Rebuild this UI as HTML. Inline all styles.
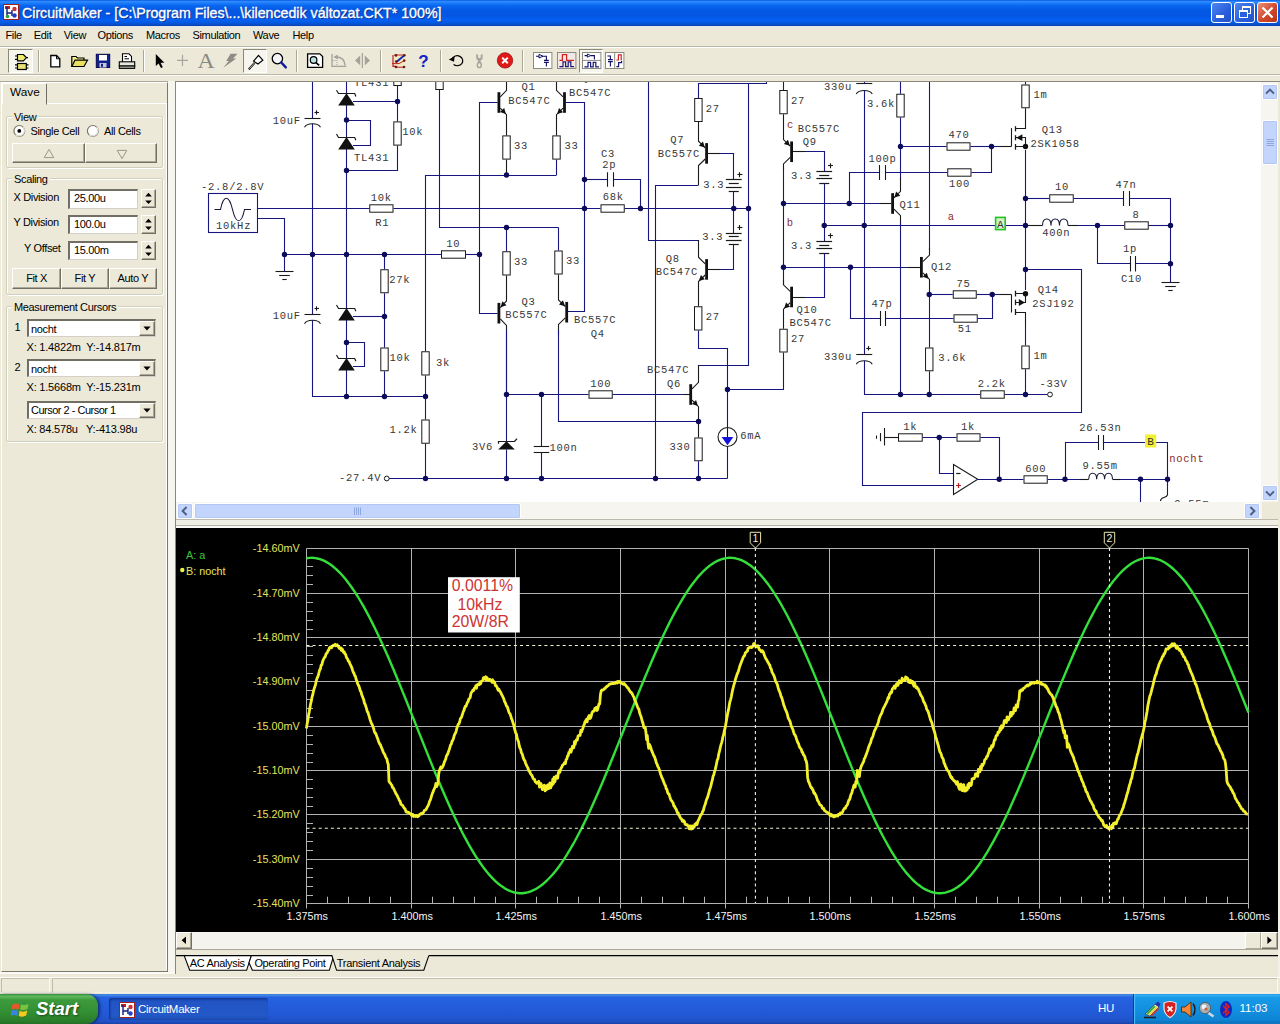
<!DOCTYPE html><html><head><meta charset="utf-8"><title>CircuitMaker</title><style>
html,body{margin:0;padding:0}
body{width:1280px;height:1024px;overflow:hidden;background:#ece9d8;position:relative;font-family:"Liberation Sans",sans-serif;font-size:11px;letter-spacing:-0.35px;color:#000}
div,span,svg{position:absolute;box-sizing:border-box}
svg text{white-space:pre}
#title{left:0;top:0;width:1280px;height:26px;background:linear-gradient(#0a5ae0 0,#2f8bff 6%,#1a7cfb 12%,#0966ef 22%,#0358e2 40%,#0356e4 60%,#0560f2 78%,#0458dd 88%,#0a4cc8 95%,#0840b0 100%)}
#title .txt{left:22px;top:5px;color:#fff;font-size:14.2px;letter-spacing:0;-webkit-text-stroke:0.35px #fff;white-space:nowrap;text-shadow:1px 1px 0 #0a2a8a}
.tb{top:2px;width:21px;height:21px;border:1px solid #fff;border-radius:3px;background:linear-gradient(135deg,#4d86ee,#2a5fdc 60%,#2250c8)}
#menu{left:0;top:26px;width:1280px;height:20px;background:linear-gradient(#e6e6e4 0,#ebe9de 3px,#ece9d8 4px)}
#menu span{top:3px;white-space:nowrap;font-size:11px}
#tool{left:0;top:47px;width:1280px;height:28px;border-top:1px solid #fff;border-bottom:1px solid #bab8a8;box-shadow:0 -1px 0 #bab8a8,0 1px 0 #fbfaf4}
.sep{top:50px;width:2px;height:22px;border-left:1px solid #aca899;border-right:1px solid #fff}
.pressed{background:#f6f5ee;border:1px solid #8a8878;border-right-color:#fff;border-bottom-color:#fff}
#lp{left:1px;top:82px;width:167px;height:890px;border-top:1px solid #fff;border-left:1px solid #fff;border-right:1px solid #7a786c;border-bottom:1px solid #7a786c}
.grp{border:1px solid #d0d0bf;box-shadow:inset 1px 1px 0 #fff,1px 1px 0 #fff;border-radius:2px}
.grp>b{left:5px;top:-6px;background:#ece9d8;padding:0 2px;font-weight:normal;white-space:nowrap;position:absolute}
.lbl{white-space:nowrap}
.inp{background:#fff;border:1px solid #7f9db9;border-top:2px solid #716f64;border-left:2px solid #716f64;border-right-color:#d4d0c8;border-bottom-color:#d4d0c8}
.inp span{left:4px;top:2px;white-space:nowrap}
.btn{background:#ece9d8;border:1px solid;border-color:#fff #716f64 #716f64 #fff;box-shadow:inset -1px -1px 0 #aca899;text-align:center;white-space:nowrap}
.spin{border:1px solid;border-color:#fff #716f64 #716f64 #fff;box-shadow:inset -1px -1px 0 #aca899;background:#ece9d8}
#schv{left:176px;top:82px;width:1085px;height:420px;background:#fff;overflow:hidden}
#schv svg{left:0;top:0}
#wavv{left:176px;top:528px;width:1102px;height:404px;background:#000;overflow:hidden}
#wavv svg{left:0;top:0}
.xsb{background:#c3d5fd;border:1px solid #fff;border-radius:2px;box-shadow:0 0 0 1px #b4c8f6 inset}
</style></head><body>

<div id="title">
<svg style="left:3px;top:4px" width="16" height="16" viewBox="0 0 16 16"><rect x="0.5" y="0.5" width="15" height="15" fill="#fff" stroke="#a02020"/><rect x="2" y="2" width="5" height="3" fill="#c02020"/><path d="M4 3 V13 M4 9 H9 M9 6 V12" stroke="#102080" stroke-width="1.4" fill="none"/><circle cx="11.5" cy="5" r="2.2" fill="#d03030"/><circle cx="11.5" cy="11.5" r="2.2" fill="#2040c0"/><circle cx="4.5" cy="12.5" r="1.8" fill="#30a030"/></svg>
<span class="txt">CircuitMaker - [C:\Program Files\...\kilencedik változat.CKT* 100%]</span>
<div class="tb" style="left:1211px"><div style="left:4px;top:12px;width:8px;height:3px;background:#fff"></div></div>
<div class="tb" style="left:1234px"><div style="left:7px;top:3px;width:9px;height:8px;border:1px solid #fff;border-top-width:2px"></div><div style="left:4px;top:7px;width:9px;height:8px;border:1px solid #fff;border-top-width:2px;background:#2a5fdc"></div></div>
<div class="tb" style="left:1257px;background:linear-gradient(135deg,#e8907a,#d0482a 55%,#b83418)"><svg style="left:3px;top:3px" width="13" height="13" viewBox="0 0 13 13"><path d="M1.5 1.5 L11.5 11.5 M11.5 1.5 L1.5 11.5" stroke="#fff" stroke-width="2.2"/></svg></div>
</div>
<div id="menu"><span style="left:5.5px">File</span><span style="left:33.8px">Edit</span><span style="left:63.8px">View</span><span style="left:97.5px">Options</span><span style="left:146px">Macros</span><span style="left:192.5px">Simulation</span><span style="left:253px">Wave</span><span style="left:292.5px">Help</span></div>
<div id="tool"></div>
<div class="pressed" style="left:8px;top:49px;width:25px;height:24px"></div>
<div class="pressed" style="left:243px;top:49px;width:24px;height:24px"></div>
<div class="pressed" style="left:579px;top:49px;width:24px;height:24px"></div>
<div class="sep" style="left:38px"></div><div class="sep" style="left:143px"></div><div class="sep" style="left:296px"></div><div class="sep" style="left:380px"></div><div class="sep" style="left:440px"></div><div class="sep" style="left:522px"></div>
<svg style="left:0;top:46px" width="640" height="30" viewBox="0 46 640 30">
<!-- parts browser -->
<path d="M15 56 H17.5 M15 59.4 H17.5 M26 57.6 H28" stroke="#000" stroke-width="1.2"/><path d="M17.5 54.5 H23.4 L26.4 57.6 L23.4 60.8 H17.5 Z" fill="#f0ec70" stroke="#000" stroke-width="1.2"/>
<path d="M15 64.8 H17.5 M15 68 H17.5 M26 64.8 H28.5 M26 68 H28.5" stroke="#000" stroke-width="1.2"/><rect x="17.5" y="63.5" width="8.8" height="6" fill="#e8e070" stroke="#000" stroke-width="1.2"/>
<!-- new -->
<path d="M50.8 55.5 H56.5 L59.8 58.8 V66.8 H50.8 Z" fill="#fff" stroke="#000" stroke-width="1.3"/><path d="M56.5 55.5 V58.8 H59.8" fill="none" stroke="#000" stroke-width="1"/>
<!-- open -->
<path d="M71.8 66.5 V56.5 H76 L77.5 58 H84 V60" fill="#f4f090" stroke="#000" stroke-width="1.2"/><path d="M71.8 66.5 L75 60.2 H87.5 L84 66.5 Z" fill="#e8e060" stroke="#000" stroke-width="1.2"/>
<!-- save -->
<rect x="96.3" y="54.3" width="13.4" height="13.2" fill="#10208c" stroke="#080850" stroke-width="1"/><rect x="99" y="55" width="8" height="5.5" fill="#fff"/><rect x="99.5" y="63" width="7" height="4.5" fill="#c8c8d8"/><rect x="101" y="63.8" width="2" height="3" fill="#10208c"/>
<!-- print -->
<path d="M122.5 62 V53.8 H129 L131.5 56.5 V62" fill="#fff" stroke="#000" stroke-width="1.1"/><rect x="119.3" y="61.8" width="15.4" height="4.2" fill="#e8e8e0" stroke="#000" stroke-width="1.1"/><rect x="119.3" y="66" width="15.4" height="2.4" fill="#a0a098" stroke="#000" stroke-width="1"/><path d="M124.5 56.5 H127 M124.5 58.8 H129" stroke="#000" stroke-width="1"/>
<!-- arrow -->
<path d="M155.8 54 V66 L158.6 63.4 L161 68 L162.8 67.2 L160.6 62.8 H164.4 Z" fill="#000"/>
<!-- plus -->
<path d="M177 60.4 H188 M182.5 54.8 V66" stroke="#a8a6a0" stroke-width="1.2"/>
<text transform="translate(197.6 67.7) scale(1.16 1)" fill="#8a8882" style="font-family:'Liberation Serif',serif;font-size:20.5px;letter-spacing:0">A</text>
<path d="M230.6 53.7 H237.5 L233 58.4 H236.3 L223.2 67.8 L228.8 60.9 H226.2 Z" fill="#8e8c86"/>
<!-- probe -->
<path d="M258.5 55.4 L262.8 60.2 L258 64 L253.6 61.2 Z" fill="#fff" stroke="#000" stroke-width="1.2"/><path d="M254.6 62.8 L248.8 69.4" stroke="#000" stroke-width="2"/><path d="M254.6 62.8 L249.4 68.8" stroke="#fff" stroke-width="0.7"/>
<!-- zoom -->
<circle cx="277.4" cy="58.6" r="5.2" fill="#f4f4fa" stroke="#000" stroke-width="1.3"/><path d="M281.3 62.5 L285.8 67.4" stroke="#1018a0" stroke-width="2.4" stroke-linecap="round"/>
<!-- fit page -->
<path d="M307.6 53.8 H319.8 L322.6 56.6 V67.4 H307.6 Z" fill="#fff" stroke="#000" stroke-width="1.3"/><circle cx="313.6" cy="60" r="3.3" fill="#b8e4e4" stroke="#000" stroke-width="1.2"/><path d="M316 62.6 L319.2 65.4" stroke="#000" stroke-width="1.6"/>
<!-- rotate -->
<path d="M332 54 V66.4 H346.4" stroke="#a4a29a" stroke-width="1.3" fill="none"/><path d="M336 57 Q344.6 57 345 65.4" stroke="#a4a29a" stroke-width="1.4" fill="none"/><path d="M333.4 57 L337.8 54.4 V59.6 Z" fill="#a4a29a"/><path d="M332.5 60.5 H337 V66" stroke="#a4a29a" stroke-width="1" stroke-dasharray="1 1" fill="none"/>
<!-- mirror -->
<path d="M362.4 53 V68" stroke="#a4a29a" stroke-width="1.2"/><path d="M360.2 55.6 V65.2 L355 60.4 Z M364.8 55.6 V65.2 L370 60.4 Z" fill="#a4a29a"/>
<!-- wire tool -->
<circle cx="399.5" cy="60.5" r="7" fill="#f4f0b0" opacity="0.45"/><path d="M393 55 V66.4 H396" stroke="#c02020" stroke-width="1.2" fill="none"/><path d="M394 55 H404 M392 63.6 H399 L404 60.8 M396 67.2 H404" stroke="#c02020" stroke-width="1" fill="none"/><path d="M396.4 62 L404.4 55.2" stroke="#1828b0" stroke-width="2"/><g fill="#701818"><circle cx="396" cy="55.4" r="1.3"/><circle cx="404.4" cy="55.2" r="1.3"/><circle cx="396.2" cy="61.6" r="1.3"/><circle cx="404.2" cy="60.6" r="1.3"/><circle cx="396" cy="67" r="1.3"/><circle cx="404" cy="67" r="1.3"/></g>
<text x="418.2" y="67.2" fill="#1420c8" style="font-size:17px;font-weight:bold">?</text>
<!-- reset -->
<path d="M452 58.8 A5.6 5 0 1 1 453.6 64.6" stroke="#000" stroke-width="1.2" fill="none"/><path d="M448.8 59.4 L454.6 56.4 L454 61.8 Z" fill="#000"/>
<!-- wrench -->
<path d="M476.2 54 V58 Q476.2 60 478 60.4 V63 H480.6 V60.4 Q482.6 60 482.6 58 V54 L480.6 55 V58 H478.2 V55 Z" fill="#a8a69e"/><ellipse cx="479.3" cy="65" rx="2" ry="2.6" fill="none" stroke="#a8a69e" stroke-width="1.5"/>
<!-- stop -->
<circle cx="505" cy="60.4" r="7.7" fill="#e01818"/><circle cx="505" cy="60.4" r="7.7" fill="none" stroke="#a01010" stroke-width="0.8"/><path d="M502.2 57.6 L507.8 63.2 M507.8 57.6 L502.2 63.2" stroke="#fff" stroke-width="2"/>
<!-- window icons -->
<rect x="533.5" y="52.5" width="18.4" height="16" fill="#fff" stroke="#8c8a80" stroke-width="1"/><path d="M536 56.2 H539 M543 56.2 H546.4 V60.4 M546.4 62.4 V66.6 M544 60.4 H548.8 M544 62.4 H548.8" stroke="#101060" stroke-width="1.1" fill="none"/><path d="M539 54.4 L543 56.2 L539 58 Z" fill="#fff" stroke="#101060" stroke-width="1"/>
<rect x="557.5" y="52.5" width="18.4" height="16" fill="#f4e8e4" stroke="#8c8a80" stroke-width="1"/><path d="M559.4 60.4 H562.4 V54.6 H566.6 V60.4 H574" stroke="#d02020" stroke-width="1.2" fill="none"/><path d="M559.4 66.6 H563 V61.8 H565.6 V66.6 H568.2 V61.8 H570.8 V66.6 H574" stroke="#181878" stroke-width="1.2" fill="none"/>
<rect x="582.5" y="52.5" width="18.4" height="16" fill="#fff" stroke="#8c8a80" stroke-width="1"/><path d="M582.5 60.4 H601" stroke="#8c8a80" stroke-width="1"/><path d="M584.6 55.6 H587.4 M590.8 55.6 H594.4 V59.4" stroke="#101060" stroke-width="1.1" fill="none"/><path d="M587.4 54 L590.8 55.6 L587.4 57.2 Z" fill="#fff" stroke="#101060" stroke-width="0.9"/><path d="M584.4 66.8 H588 V62.4 H590.6 V66.8 H593.2 V62.4 H595.8 V66.8 H599" stroke="#181878" stroke-width="1.2" fill="none"/>
<rect x="605.5" y="52.5" width="18.4" height="16" fill="#fff" stroke="#8c8a80" stroke-width="1"/><path d="M614.7 52.5 V68.5" stroke="#8c8a80" stroke-width="1"/><path d="M607.4 56 H610.4 V59.6 M610.4 61.6 V66.6 M608 59.6 H612.8 M608 61.6 H612.8" stroke="#101060" stroke-width="1.1" fill="none"/><path d="M616.4 60 H618.4 V54.8 H621.2 V60.4" stroke="#d02020" stroke-width="1.2" fill="none"/><path d="M616.4 66.6 H618.6 V62.6 H621.6 V61" stroke="#181878" stroke-width="1.2" fill="none"/>
</svg>

<div style="left:0;top:81px;width:176px;height:1px;background:#aaa89a"></div><div id="lp"></div>
<div style="left:2px;top:83.4px;width:45px;height:21.6px;background:#ece9d8;border:1px solid;border-color:#fff #716f64 transparent #fff;border-radius:2px 2px 0 0"><span class="lbl" style="left:7px;top:1px;font-size:11.8px;letter-spacing:0">Wave</span></div>
<div style="left:47px;top:103px;width:120px;height:1px;background:#fff"></div>
<div style="left:166px;top:104px;width:1px;height:866px;background:#fff"></div>
<div class="grp" style="left:6px;top:116px;width:157px;height:52px"><b>View</b></div>
<svg style="left:12px;top:124px" width="100" height="14" viewBox="12 124 100 14"><g><circle cx="19.3" cy="130.9" r="5.4" fill="#fff" stroke="#7a7868" stroke-width="1.2"/><path d="M15.5 134.7 A5.4 5.4 0 0 0 23.1 127.1" stroke="#e8e6da" stroke-width="1.3" fill="none"/><circle cx="19.3" cy="130.9" r="1.9" fill="#000"/><circle cx="92.8" cy="130.9" r="5.4" fill="#fff" stroke="#7a7868" stroke-width="1.2"/><path d="M89 134.7 A5.4 5.4 0 0 0 96.6 127.1" stroke="#e8e6da" stroke-width="1.3" fill="none"/></g></svg>
<span class="lbl" style="left:30.5px;top:124.6px">Single Cell</span><span class="lbl" style="left:104px;top:124.6px">All Cells</span>
<div class="btn" style="left:12.4px;top:142.5px;width:72.4px;height:20px"><svg style="left:30px;top:4px" width="12" height="11" viewBox="0 0 12 11"><path d="M1.2 9.6 L6 1.4 L10.8 9.6 Z" fill="none" stroke="#9a988c" stroke-width="1"/></svg></div>
<div class="btn" style="left:84.8px;top:142.5px;width:72px;height:20px"><svg style="left:30px;top:5px" width="12" height="11" viewBox="0 0 12 11"><path d="M1.2 1.4 L6 9.6 L10.8 1.4 Z" fill="none" stroke="#9a988c" stroke-width="1"/></svg></div>
<div class="grp" style="left:6px;top:177.5px;width:157px;height:117px"><b>Scaling</b></div>
<span class="lbl" style="left:13.5px;top:190.5px">X Division</span><span class="lbl" style="left:13.5px;top:216px">Y Division</span><span class="lbl" style="left:24px;top:242px">Y Offset</span>
<div class="inp" style="left:67.5px;top:189px;width:70.5px;height:19.5px"><span style="left:4.5px;top:1.3px">25.00u</span></div><div class="spin" style="left:141px;top:189px;width:15px;height:19px"><svg style="left:0;top:0" width="13" height="17" viewBox="0 0 13 17"><path d="M3.2 6.4 L6.5 2.8 L9.8 6.4 Z M3.2 10.4 L6.5 14 L9.8 10.4 Z" fill="#000"/></svg></div>
<div class="inp" style="left:67.5px;top:215px;width:70.5px;height:19px"><span style="left:4.5px;top:1px">100.0u</span></div><div class="spin" style="left:141px;top:215px;width:15px;height:19px"><svg style="left:0;top:0" width="13" height="17" viewBox="0 0 13 17"><path d="M3.2 6.4 L6.5 2.8 L9.8 6.4 Z M3.2 10.4 L6.5 14 L9.8 10.4 Z" fill="#000"/></svg></div>
<div class="inp" style="left:67.5px;top:241px;width:70.5px;height:19px"><span style="left:4.5px;top:1px">15.00m</span></div><div class="spin" style="left:141px;top:241px;width:15px;height:19px"><svg style="left:0;top:0" width="13" height="17" viewBox="0 0 13 17"><path d="M3.2 6.4 L6.5 2.8 L9.8 6.4 Z M3.2 10.4 L6.5 14 L9.8 10.4 Z" fill="#000"/></svg></div>
<div class="btn" style="left:12.4px;top:268px;width:48.4px;height:20.5px;line-height:18px">Fit X</div><div class="btn" style="left:60.8px;top:268px;width:48.2px;height:20.5px;line-height:18px">Fit Y</div><div class="btn" style="left:109px;top:268px;width:47.6px;height:20.5px;line-height:18px">Auto Y</div>
<div class="grp" style="left:6px;top:306px;width:157px;height:135.5px"><b>Measurement Cursors</b></div>
<span class="lbl" style="left:14.5px;top:321px">1</span><span class="lbl" style="left:14.5px;top:361px">2</span>
<div class="inp" style="left:26.5px;top:319.4px;width:129px;height:18px"><span style="left:2.5px;top:1.5px;letter-spacing:-0.35px">nocht</span><div class="spin" style="left:110px;top:0;width:16px;height:15px"><svg style="left:0;top:0" width="14" height="13" viewBox="0 0 14 13"><path d="M3.4 4.6 H10.6 L7 8.6 Z" fill="#000"/></svg></div></div><span class="lbl" style="left:26.5px;top:341px;letter-spacing:-0.2px">X: 1.4822m&nbsp; Y:-14.817m</span>
<div class="inp" style="left:26.5px;top:359.3px;width:129px;height:18px"><span style="left:2.5px;top:1.5px;letter-spacing:-0.35px">nocht</span><div class="spin" style="left:110px;top:0;width:16px;height:15px"><svg style="left:0;top:0" width="14" height="13" viewBox="0 0 14 13"><path d="M3.4 4.6 H10.6 L7 8.6 Z" fill="#000"/></svg></div></div><span class="lbl" style="left:26.5px;top:381px;letter-spacing:-0.2px">X: 1.5668m&nbsp; Y:-15.231m</span>
<div class="inp" style="left:26.5px;top:400.7px;width:129px;height:18px"><span style="left:2.5px;top:1.5px;letter-spacing:-0.5px">Cursor 2 - Cursor 1</span><div class="spin" style="left:110px;top:0;width:16px;height:15px"><svg style="left:0;top:0" width="14" height="13" viewBox="0 0 14 13"><path d="M3.4 4.6 H10.6 L7 8.6 Z" fill="#000"/></svg></div></div><span class="lbl" style="left:26.5px;top:423px;letter-spacing:-0.2px">X: 84.578u&nbsp;&nbsp; Y:-413.98u</span>
<div style="left:168px;top:81px;width:7px;height:893px;background:#f6f5ee"></div><div style="left:0;top:972px;width:176px;height:2px;background:#fbfaf4"></div>
<div style="left:175px;top:81px;width:1105px;height:1px;background:#8a887c"></div>
<div style="left:175px;top:81px;width:1px;height:893px;background:#8a887c"></div>
<div id="schv"><svg class="sch" width="1086" height="420" viewBox="176 82 1086 420" style="font-family:'Liberation Mono',monospace;font-size:10.5px;letter-spacing:0.75px">
<path d="M312.5 80 L312.5 118.5" stroke="#16167e" stroke-width="1.1" fill="none"/>
<path d="M312.5 123.7 L312.5 314.5" stroke="#16167e" stroke-width="1.1" fill="none"/>
<path d="M312.5 320.3 L312.5 396.5 L425.5 396.5" stroke="#16167e" stroke-width="1.1" fill="none"/>
<path d="M304.5 118.5 L320.5 118.5" stroke="#1a1a1a" stroke-width="1.1" fill="none"/>
<path d="M304.5 127.2 Q306.5 123.7 312.5 123.7 Q318.5 123.7 320.5 127.2" stroke="#1a1a1a" stroke-width="1.1" fill="none"/>
<path d="M314.5 112.5 L319 112.5" stroke="#1a1a1a" stroke-width="1.1" fill="none"/>
<path d="M316.5 110.3 L316.5 114.7" stroke="#1a1a1a" stroke-width="1.1" fill="none"/>
<path d="M304.5 314.5 L320.5 314.5" stroke="#1a1a1a" stroke-width="1.1" fill="none"/>
<path d="M304.5 323.8 Q306.5 320.3 312.5 320.3 Q318.5 320.3 320.5 323.8" stroke="#1a1a1a" stroke-width="1.1" fill="none"/>
<path d="M314.5 308.5 L319 308.5" stroke="#1a1a1a" stroke-width="1.1" fill="none"/>
<path d="M316.5 306.3 L316.5 310.7" stroke="#1a1a1a" stroke-width="1.1" fill="none"/>
<text x="272.7" y="124.15" fill="#383838">10uF</text>
<text x="272.7" y="319.4" fill="#383838">10uF</text>
<path d="M346.5 80 L346.5 396.5" stroke="#16167e" stroke-width="1.1" fill="none"/>
<path d="M346.5 93.25 L338.2 105.4 L354.8 105.4 Z" fill="#111"/>
<path d="M336.5 90.25 L338.5 93.5 L354.7 93.5 L355.9 96.45" stroke="#1a1a1a" stroke-width="1.2" fill="none"/>
<path d="M346.5 137 L338.2 149.5 L354.8 149.5 Z" fill="#111"/>
<path d="M336.5 134 L338.5 137.5 L354.7 137.5 L355.9 140.2" stroke="#1a1a1a" stroke-width="1.2" fill="none"/>
<path d="M346.5 308 L338.2 320.5 L354.8 320.5 Z" fill="#111"/>
<path d="M336.5 305 L338.5 308.5 L354.7 308.5 L355.9 311.2" stroke="#1a1a1a" stroke-width="1.2" fill="none"/>
<path d="M346.5 358 L338.2 370.5 L354.8 370.5 Z" fill="#111"/>
<path d="M336.5 355 L338.5 358.5 L354.7 358.5 L355.9 361.2" stroke="#1a1a1a" stroke-width="1.2" fill="none"/>
<path d="M353 101.5 L397.5 101.5" stroke="#16167e" stroke-width="1.1" fill="none"/>
<path d="M346.5 120.5 L370.5 120.5 L370.5 145.5 L353 145.5" stroke="#16167e" stroke-width="1.1" fill="none"/>
<path d="M346.5 342.5 L364.5 342.5 L364.5 366.5 L353 366.5" stroke="#16167e" stroke-width="1.1" fill="none"/>
<path d="M353 316.5 L384.5 316.5" stroke="#16167e" stroke-width="1.1" fill="none"/>
<text x="354" y="86.15" fill="#383838">TL431</text>
<text x="354" y="161" fill="#383838">TL431</text>
<rect x="393.8" y="70.5" width="7.4" height="15" fill="#fff" stroke="#1a1a1a" stroke-width="1"/>
<path d="M397.5 86 L397.5 121.4" stroke="#16167e" stroke-width="1.1" fill="none"/>
<rect x="393.8" y="121.9" width="7.4" height="23.2" fill="#fff" stroke="#1a1a1a" stroke-width="1"/>
<path d="M397.5 145.6 L397.5 170.5 L346.5 170.5" stroke="#16167e" stroke-width="1.1" fill="none"/>
<text x="402.2" y="134.9" fill="#383838">10k</text>
<rect x="435.8" y="70.5" width="7.4" height="19" fill="#fff" stroke="#1a1a1a" stroke-width="1"/>
<path d="M439.5 90 L439.5 227.5 L558.5 227.5" stroke="#16167e" stroke-width="1.1" fill="none"/>
<path d="M384.5 254.5 L384.5 269.25" stroke="#16167e" stroke-width="1.1" fill="none"/>
<rect x="380.8" y="269.75" width="7.4" height="23" fill="#fff" stroke="#1a1a1a" stroke-width="1"/>
<path d="M384.5 293.25 L384.5 347.5" stroke="#16167e" stroke-width="1.1" fill="none"/>
<rect x="380.8" y="348" width="7.4" height="22.75" fill="#fff" stroke="#1a1a1a" stroke-width="1"/>
<path d="M384.5 371.25 L384.5 396.5" stroke="#16167e" stroke-width="1.1" fill="none"/>
<text x="389.2" y="282.9" fill="#383838">27k</text>
<text x="389.45" y="361.15" fill="#383838">10k</text>
<rect x="208.5" y="193.5" width="49" height="39" fill="#fff" stroke="#16167e" stroke-width="1.1"/>
<path d="M214.5 209.5 H220.5 C223.5 194.5 229 194.5 232.5 209.5 C236 224.5 241.5 224.5 244.5 209.5 H251" stroke="#16163a" stroke-width="1.1" fill="none"/>
<text x="200.95" y="190.4" fill="#383838">-2.8/2.8V</text>
<text x="215.95" y="229.4" fill="#383838">10kHz</text>
<path d="M257.5 208.5 L369.25 208.5" stroke="#16167e" stroke-width="1.1" fill="none"/>
<rect x="369.75" y="204.8" width="23.25" height="7.4" fill="#fff" stroke="#1a1a1a" stroke-width="1"/>
<path d="M393.5 208.5 L600.5 208.5" stroke="#16167e" stroke-width="1.1" fill="none"/>
<rect x="601" y="204.8" width="23.25" height="7.4" fill="#fff" stroke="#1a1a1a" stroke-width="1"/>
<path d="M624.75 208.5 L748.5 208.5" stroke="#16167e" stroke-width="1.1" fill="none"/>
<text x="370.7" y="200.9" fill="#383838">10k</text>
<text x="375.2" y="226.15" fill="#383838">R1</text>
<text x="602.7" y="200.4" fill="#383838">68k</text>
<path d="M257.5 218.5 L284.5 218.5 L284.5 271.25" stroke="#16167e" stroke-width="1.1" fill="none"/>
<path d="M275.5 271.5 L293.5 271.5" stroke="#1a1a1a" stroke-width="1.1" fill="none"/>
<path d="M279.2 275.5 L289.8 275.5" stroke="#1a1a1a" stroke-width="1.1" fill="none"/>
<path d="M282.3 279.5 L286.7 279.5" stroke="#1a1a1a" stroke-width="1.1" fill="none"/>
<path d="M284.5 254.5 L441 254.5" stroke="#16167e" stroke-width="1.1" fill="none"/>
<rect x="441.5" y="250.8" width="24" height="7.4" fill="#fff" stroke="#1a1a1a" stroke-width="1"/>
<path d="M466 254.5 L479.5 254.5" stroke="#16167e" stroke-width="1.1" fill="none"/>
<text x="446.2" y="247.4" fill="#383838">10</text>
<path d="M556.5 175.5 L425.5 175.5 L425.5 351.25" stroke="#16167e" stroke-width="1.1" fill="none"/>
<rect x="421.8" y="351.75" width="7.4" height="23.25" fill="#fff" stroke="#1a1a1a" stroke-width="1"/>
<path d="M425.5 375.5 L425.5 419.5" stroke="#16167e" stroke-width="1.1" fill="none"/>
<rect x="421.8" y="420" width="7.4" height="23.25" fill="#fff" stroke="#1a1a1a" stroke-width="1"/>
<path d="M425.5 443.75 L425.5 478.5" stroke="#16167e" stroke-width="1.1" fill="none"/>
<text x="435.95" y="365.9" fill="#383838">3k</text>
<text x="389.45" y="433.4" fill="#383838">1.2k</text>
<path d="M389 478.5 L727.5 478.5" stroke="#16167e" stroke-width="1.1" fill="none"/>
<circle cx="386.75" cy="478.5" r="2.4" fill="#fff" stroke="#1a1a1a" stroke-width="1"/>
<text x="338.95" y="480.9" fill="#383838">-27.4V</text>
<path d="M497.6 102.5 L479.5 102.5 L479.5 313.5 L497.6 313.5" stroke="#16167e" stroke-width="1.1" fill="none"/>
<rect x="497.5" y="92.2" width="2.8" height="20.6" fill="#111"/>
<path d="M500.3 96.9 L506.5 90.3 L506.5 80" stroke="#1a1a1a" stroke-width="1.1" fill="none"/>
<path d="M500.3 108.1 L506.5 114.7 L506.5 135.4" stroke="#1a1a1a" stroke-width="1.1" fill="none"/>
<path d="M505.9 114.1 L499.96 111.98 L504.20 108.03 Z" fill="#111"/>
<rect x="502.8" y="135.9" width="7.4" height="23.2" fill="#fff" stroke="#1a1a1a" stroke-width="1"/>
<path d="M506.5 159.6 L506.5 175" stroke="#1a1a1a" stroke-width="1.1" fill="none"/>
<rect x="563.1" y="92.2" width="2.8" height="20.6" fill="#111"/>
<path d="M563.1 96.9 L556.5 90.3 L556.5 80" stroke="#1a1a1a" stroke-width="1.1" fill="none"/>
<path d="M563.1 108.1 L556.5 114.7 L556.5 135.4" stroke="#1a1a1a" stroke-width="1.1" fill="none"/>
<path d="M557.1 114.1 L559.01 108.09 L563.11 112.19 Z" fill="#111"/>
<rect x="552.8" y="135.9" width="7.4" height="23.2" fill="#fff" stroke="#1a1a1a" stroke-width="1"/>
<path d="M556.5 159.6 L556.5 175" stroke="#16167e" stroke-width="1.1" fill="none"/>
<text x="521.45" y="90.4" fill="#383838">Q1</text>
<text x="508.2" y="104.15" fill="#383838">BC547C</text>
<text x="568.95" y="95.9" fill="#383838">BC547C</text>
<text x="581.2" y="81" fill="#383838">Q2</text>
<text x="513.95" y="149.15" fill="#383838">33</text>
<text x="564.45" y="149.15" fill="#383838">33</text>
<path d="M566 102.5 L584.5 102.5 L584.5 311.5 L568 311.5" stroke="#16167e" stroke-width="1.1" fill="none"/>
<path d="M506.5 227.5 L506.5 251.25" stroke="#16167e" stroke-width="1.1" fill="none"/>
<rect x="502.8" y="251.75" width="7.4" height="23.25" fill="#fff" stroke="#1a1a1a" stroke-width="1"/>
<rect x="497.5" y="302.9" width="2.8" height="20.6" fill="#111"/>
<path d="M500.3 307.6 L506.5 301 L506.5 275.5" stroke="#1a1a1a" stroke-width="1.1" fill="none"/>
<path d="M500.3 318.8 L506.5 325.4 L506.5 394.5" stroke="#1a1a1a" stroke-width="1.1" fill="none"/>
<path d="M500.6 307.3 L502.31 301.23 L506.54 305.19 Z" fill="#111"/>
<path d="M506.5 330 L506.5 441" stroke="#16167e" stroke-width="1.1" fill="none"/>
<path d="M506.5 449.5 L506.5 478.5" stroke="#16167e" stroke-width="1.1" fill="none"/>
<path d="M558.5 227.5 L558.5 250.5" stroke="#16167e" stroke-width="1.1" fill="none"/>
<rect x="554.8" y="251" width="7.4" height="23" fill="#fff" stroke="#1a1a1a" stroke-width="1"/>
<rect x="565.3" y="301.9" width="2.8" height="20.6" fill="#111"/>
<path d="M565.3 306.6 L558.5 300 L558.5 274.5" stroke="#1a1a1a" stroke-width="1.1" fill="none"/>
<path d="M565.3 317.8 L558.5 324.4 L558.5 335" stroke="#1a1a1a" stroke-width="1.1" fill="none"/>
<path d="M565 306.3 L558.96 304.48 L563.00 300.32 Z" fill="#111"/>
<path d="M558.5 330 L558.5 421.5 L698.5 421.5" stroke="#16167e" stroke-width="1.1" fill="none"/>
<text x="513.95" y="264.65" fill="#383838">33</text>
<text x="565.95" y="263.65" fill="#383838">33</text>
<text x="521.45" y="305.4" fill="#383838">Q3</text>
<text x="505.2" y="317.9" fill="#383838">BC557C</text>
<text x="573.95" y="322.9" fill="#383838">BC557C</text>
<text x="590.7" y="336.9" fill="#383838">Q4</text>
<path d="M584.5 179.5 L607.75 179.5" stroke="#16167e" stroke-width="1.1" fill="none"/>
<path d="M607.5 172.25 L607.5 186.75" stroke="#1a1a1a" stroke-width="1.1" fill="none"/>
<path d="M613.5 172.25 L613.5 186.75" stroke="#1a1a1a" stroke-width="1.1" fill="none"/>
<path d="M613.5 179.5 L640.5 179.5 L640.5 208.5" stroke="#16167e" stroke-width="1.1" fill="none"/>
<text x="600.95" y="157.4" fill="#383838">C3</text>
<text x="602.2" y="167.9" fill="#383838">2p</text>
<path d="M506.5 441.25 L498.2 449.5 L514.8 449.5 Z" fill="#111"/>
<path d="M498.5 443.75 L498.5 441.5 L514.5 441.5 L517 438.75" stroke="#1a1a1a" stroke-width="1.2" fill="none"/>
<text x="471.95" y="449.65" fill="#383838">3V6</text>
<path d="M506.5 394.5 L588.5 394.5" stroke="#16167e" stroke-width="1.1" fill="none"/>
<rect x="589" y="390.8" width="23.25" height="7.4" fill="#fff" stroke="#1a1a1a" stroke-width="1"/>
<path d="M612.75 394.5 L686 394.5" stroke="#16167e" stroke-width="1.1" fill="none"/>
<path d="M684 394.5 L690.7 394.5" stroke="#1a1a1a" stroke-width="1.1" fill="none"/>
<text x="590.2" y="386.65" fill="#383838">100</text>
<path d="M541.5 394.5 L541.5 446.25" stroke="#16167e" stroke-width="1.1" fill="none"/>
<path d="M533.75 446.5 L549.25 446.5" stroke="#1a1a1a" stroke-width="1.1" fill="none"/>
<path d="M533.75 452.5 L549.25 452.5" stroke="#1a1a1a" stroke-width="1.1" fill="none"/>
<path d="M541.5 452 L541.5 478.5" stroke="#16167e" stroke-width="1.1" fill="none"/>
<text x="549.45" y="450.9" fill="#383838">100n</text>
<path d="M648.5 80 L648.5 240.5 L698 240.5" stroke="#16167e" stroke-width="1.1" fill="none"/>
<path d="M698 185.5 L655.5 185.5 L655.5 478.5" stroke="#16167e" stroke-width="1.1" fill="none"/>
<path d="M766.5 80 L766.5 83.5 L698.5 83.5 L698.5 98" stroke="#16167e" stroke-width="1.1" fill="none"/>
<rect x="694.7" y="98.5" width="7.4" height="23" fill="#fff" stroke="#1a1a1a" stroke-width="1"/>
<text x="705.7" y="112.15" fill="#383838">27</text>
<path d="M748.5 83.75 L748.5 365.5 L698.5 365.5" stroke="#16167e" stroke-width="1.1" fill="none"/>
<rect x="705.2" y="143.1" width="2.8" height="20.6" fill="#111"/>
<path d="M705.2 147.8 L698.5 141.2 L698.5 122" stroke="#1a1a1a" stroke-width="1.1" fill="none"/>
<path d="M705.2 159 L698.5 165.6 L698.5 185.5" stroke="#1a1a1a" stroke-width="1.1" fill="none"/>
<path d="M704.9 147.5 L698.86 145.68 L702.90 141.52 Z" fill="#111"/>
<path d="M708 153.5 L720 153.5" stroke="#1a1a1a" stroke-width="1.1" fill="none"/>
<path d="M720 153.5 L733.5 153.5 L733.5 179.4" stroke="#16167e" stroke-width="1.1" fill="none"/>
<path d="M725.85 179.5 L741.65 179.5" stroke="#1a1a1a" stroke-width="1.2" fill="none"/>
<path d="M728.75 183.5 L738.75 183.5" stroke="#1a1a1a" stroke-width="1.2" fill="none"/>
<path d="M725.85 187.5 L741.65 187.5" stroke="#1a1a1a" stroke-width="1.2" fill="none"/>
<path d="M728.75 191.5 L738.75 191.5" stroke="#1a1a1a" stroke-width="1.2" fill="none"/>
<path d="M737.45 174.5 L742.45 174.5" stroke="#1a1a1a" stroke-width="1.1" fill="none"/>
<path d="M739.5 172.2 L739.5 177.2" stroke="#1a1a1a" stroke-width="1.1" fill="none"/>
<path d="M733.5 191.2 L733.5 233" stroke="#16167e" stroke-width="1.1" fill="none"/>
<path d="M725.85 233.5 L741.65 233.5" stroke="#1a1a1a" stroke-width="1.2" fill="none"/>
<path d="M728.75 236.5 L738.75 236.5" stroke="#1a1a1a" stroke-width="1.2" fill="none"/>
<path d="M725.85 240.5 L741.65 240.5" stroke="#1a1a1a" stroke-width="1.2" fill="none"/>
<path d="M728.75 244.5 L738.75 244.5" stroke="#1a1a1a" stroke-width="1.2" fill="none"/>
<path d="M737.45 227.5 L742.45 227.5" stroke="#1a1a1a" stroke-width="1.1" fill="none"/>
<path d="M739.5 225 L739.5 230" stroke="#1a1a1a" stroke-width="1.1" fill="none"/>
<path d="M733.5 244.8 L733.5 269.5 L720 269.5" stroke="#16167e" stroke-width="1.1" fill="none"/>
<path d="M720 269.5 L708 269.5" stroke="#1a1a1a" stroke-width="1.1" fill="none"/>
<text x="670.2" y="143.4" fill="#383838">Q7</text>
<text x="657.7" y="157.4" fill="#383838">BC557C</text>
<text x="703.2" y="187.6" fill="#383838">3.3</text>
<text x="702.2" y="240.4" fill="#383838">3.3</text>
<rect x="705.2" y="259.1" width="2.8" height="20.6" fill="#111"/>
<path d="M705.2 263.8 L698.5 257.2 L698.5 240" stroke="#1a1a1a" stroke-width="1.1" fill="none"/>
<path d="M705.2 275 L698.5 281.6 L698.5 306.25" stroke="#1a1a1a" stroke-width="1.1" fill="none"/>
<path d="M698.8 281 L700.90 275.05 L704.87 279.29 Z" fill="#111"/>
<rect x="694.5" y="306.75" width="7.4" height="23.25" fill="#fff" stroke="#1a1a1a" stroke-width="1"/>
<text x="665.7" y="261.65" fill="#383838">Q8</text>
<text x="655.7" y="274.65" fill="#383838">BC547C</text>
<text x="705.7" y="319.65" fill="#383838">27</text>
<path d="M698.5 330.5 L698.5 348.5 L727.5 348.5 L727.5 427.5" stroke="#16167e" stroke-width="1.1" fill="none"/>
<path d="M727.5 389.5 L783.5 389.5 L783.5 352.5" stroke="#16167e" stroke-width="1.1" fill="none"/>
<circle cx="727.5" cy="437" r="9.5" fill="#fff" stroke="#1a1a1a" stroke-width="1.1"/>
<path d="M727.5 427.5 L727.5 437" stroke="#1a1a1a" stroke-width="1.1" fill="none"/>
<path d="M721.7 437 H733.3 L727.5 445.2 Z" fill="#1414d8"/>
<path d="M727.5 446.5 L727.5 478.5" stroke="#16167e" stroke-width="1.1" fill="none"/>
<text x="740.2" y="439.15" fill="#383838">6mA</text>
<rect x="689.3" y="384.2" width="2.8" height="20.6" fill="#111"/>
<path d="M692.1 388.9 L698.5 382.3 L698.5 365" stroke="#1a1a1a" stroke-width="1.1" fill="none"/>
<path d="M692.1 400.1 L698.5 406.7 L698.5 437.5" stroke="#1a1a1a" stroke-width="1.1" fill="none"/>
<path d="M697.9 406.1 L691.92 404.09 L696.09 400.06 Z" fill="#111"/>
<rect x="694.8" y="438" width="7.4" height="22.75" fill="#fff" stroke="#1a1a1a" stroke-width="1"/>
<path d="M698.5 461.25 L698.5 478.5" stroke="#16167e" stroke-width="1.1" fill="none"/>
<text x="646.95" y="372.9" fill="#383838">BC547C</text>
<text x="666.95" y="386.65" fill="#383838">Q6</text>
<text x="669.45" y="449.6" fill="#383838">330</text>
<circle cx="346.5" cy="120" r="2.7" fill="#0c0c5a"/>
<circle cx="346.5" cy="170.5" r="2.7" fill="#0c0c5a"/>
<circle cx="346.5" cy="254.5" r="2.7" fill="#0c0c5a"/>
<circle cx="346.5" cy="342.5" r="2.7" fill="#0c0c5a"/>
<circle cx="346.5" cy="396.5" r="2.7" fill="#0c0c5a"/>
<circle cx="397.5" cy="101.5" r="2.7" fill="#0c0c5a"/>
<circle cx="384.5" cy="254.5" r="2.7" fill="#0c0c5a"/>
<circle cx="384.5" cy="316.5" r="2.7" fill="#0c0c5a"/>
<circle cx="384.5" cy="396.5" r="2.7" fill="#0c0c5a"/>
<circle cx="284.5" cy="254.5" r="2.7" fill="#0c0c5a"/>
<circle cx="312.5" cy="254.5" r="2.7" fill="#0c0c5a"/>
<circle cx="479.5" cy="254.5" r="2.7" fill="#0c0c5a"/>
<circle cx="425.5" cy="396.5" r="2.7" fill="#0c0c5a"/>
<circle cx="425.5" cy="478.5" r="2.7" fill="#0c0c5a"/>
<circle cx="506.5" cy="175" r="2.7" fill="#0c0c5a"/>
<circle cx="506.5" cy="227.5" r="2.7" fill="#0c0c5a"/>
<circle cx="506.5" cy="394.5" r="2.7" fill="#0c0c5a"/>
<circle cx="506.5" cy="478.5" r="2.7" fill="#0c0c5a"/>
<circle cx="541.5" cy="394.5" r="2.7" fill="#0c0c5a"/>
<circle cx="541.5" cy="478.5" r="2.7" fill="#0c0c5a"/>
<circle cx="584.5" cy="179.5" r="2.7" fill="#0c0c5a"/>
<circle cx="584.5" cy="208.5" r="2.7" fill="#0c0c5a"/>
<circle cx="640.5" cy="208.5" r="2.7" fill="#0c0c5a"/>
<circle cx="733.75" cy="208.5" r="2.7" fill="#0c0c5a"/>
<circle cx="748.5" cy="208.5" r="2.7" fill="#0c0c5a"/>
<circle cx="655.5" cy="478.5" r="2.7" fill="#0c0c5a"/>
<circle cx="698.5" cy="421.5" r="2.7" fill="#0c0c5a"/>
<circle cx="698.5" cy="478.5" r="2.7" fill="#0c0c5a"/>
<circle cx="727.5" cy="389.5" r="2.7" fill="#0c0c5a"/>
<path d="M783.5 80 L783.5 90" stroke="#16167e" stroke-width="1.1" fill="none"/>
<rect x="779.8" y="90.5" width="7.4" height="23.25" fill="#fff" stroke="#1a1a1a" stroke-width="1"/>
<text x="790.95" y="104.15" fill="#383838">27</text>
<rect x="790.2" y="141.45" width="2.8" height="20.6" fill="#111"/>
<path d="M790.2 146.15 L783.5 139.55 L783.5 114.25" stroke="#1a1a1a" stroke-width="1.1" fill="none"/>
<path d="M790.2 157.35 L783.5 163.95 L783.5 170" stroke="#1a1a1a" stroke-width="1.1" fill="none"/>
<path d="M789.9 145.85 L783.87 143.99 L787.94 139.85 Z" fill="#111"/>
<path d="M783.5 168 L783.5 285" stroke="#16167e" stroke-width="1.1" fill="none"/>
<text x="787" y="127.9" fill="#8a2a2a">c</text>
<text x="797.7" y="131.65" fill="#383838">BC557C</text>
<text x="802.7" y="145.4" fill="#383838">Q9</text>
<path d="M793 151.5 L805 151.5" stroke="#1a1a1a" stroke-width="1.1" fill="none"/>
<path d="M805 151.5 L824.5 151.5 L824.5 171.25" stroke="#16167e" stroke-width="1.1" fill="none"/>
<path d="M816.35 171.5 L832.15 171.5" stroke="#1a1a1a" stroke-width="1.2" fill="none"/>
<path d="M819.25 175.5 L829.25 175.5" stroke="#1a1a1a" stroke-width="1.2" fill="none"/>
<path d="M816.35 178.5 L832.15 178.5" stroke="#1a1a1a" stroke-width="1.2" fill="none"/>
<path d="M819.25 183.5 L829.25 183.5" stroke="#1a1a1a" stroke-width="1.2" fill="none"/>
<path d="M827.95 165.5 L832.95 165.5" stroke="#1a1a1a" stroke-width="1.1" fill="none"/>
<path d="M830.5 163.25 L830.5 168.25" stroke="#1a1a1a" stroke-width="1.1" fill="none"/>
<path d="M824.5 183 L824.5 241.25" stroke="#16167e" stroke-width="1.1" fill="none"/>
<path d="M816.35 241.5 L832.15 241.5" stroke="#1a1a1a" stroke-width="1.2" fill="none"/>
<path d="M819.25 245.5 L829.25 245.5" stroke="#1a1a1a" stroke-width="1.2" fill="none"/>
<path d="M816.35 248.5 L832.15 248.5" stroke="#1a1a1a" stroke-width="1.2" fill="none"/>
<path d="M819.25 253.5 L829.25 253.5" stroke="#1a1a1a" stroke-width="1.2" fill="none"/>
<path d="M827.95 235.5 L832.95 235.5" stroke="#1a1a1a" stroke-width="1.1" fill="none"/>
<path d="M830.5 233.25 L830.5 238.25" stroke="#1a1a1a" stroke-width="1.1" fill="none"/>
<path d="M824.5 253 L824.5 297.5 L805 297.5" stroke="#16167e" stroke-width="1.1" fill="none"/>
<path d="M805 297.5 L793 297.5" stroke="#1a1a1a" stroke-width="1.1" fill="none"/>
<text x="790.95" y="178.65" fill="#383838">3.3</text>
<text x="786.7" y="226.15" fill="#8a2a2a">b</text>
<text x="790.95" y="248.65" fill="#383838">3.3</text>
<rect x="790.2" y="286.7" width="2.8" height="20.6" fill="#111"/>
<path d="M790.2 291.4 L783.5 284.8 L783.5 280" stroke="#1a1a1a" stroke-width="1.1" fill="none"/>
<path d="M790.2 302.6 L783.5 309.2 L783.5 328.75" stroke="#1a1a1a" stroke-width="1.1" fill="none"/>
<path d="M784.1 308.6 L786.06 302.61 L790.13 306.74 Z" fill="#111"/>
<rect x="779.8" y="329.25" width="7.4" height="22.75" fill="#fff" stroke="#1a1a1a" stroke-width="1"/>
<text x="796.45" y="312.9" fill="#383838">Q10</text>
<text x="789.45" y="326.15" fill="#383838">BC547C</text>
<text x="790.95" y="342.4" fill="#383838">27</text>
<path d="M824.25 225.5 L1025.5 225.5" stroke="#16167e" stroke-width="1.1" fill="none"/>
<path d="M783.5 203.5 L880 203.5" stroke="#16167e" stroke-width="1.1" fill="none"/>
<path d="M880 203.5 L891.2 203.5" stroke="#1a1a1a" stroke-width="1.1" fill="none"/>
<path d="M849.5 203.5 L849.5 172.5 L879.75 172.5" stroke="#16167e" stroke-width="1.1" fill="none"/>
<path d="M879.5 165 L879.5 180" stroke="#1a1a1a" stroke-width="1.1" fill="none"/>
<path d="M885.5 165 L885.5 180" stroke="#1a1a1a" stroke-width="1.1" fill="none"/>
<path d="M885.25 172.5 L947.25 172.5" stroke="#16167e" stroke-width="1.1" fill="none"/>
<rect x="947.75" y="168.8" width="23.25" height="7.4" fill="#fff" stroke="#1a1a1a" stroke-width="1"/>
<path d="M971.5 172.5 L991.5 172.5 L991.5 146.5" stroke="#16167e" stroke-width="1.1" fill="none"/>
<text x="868.45" y="161.65" fill="#383838">100p</text>
<text x="948.95" y="186.65" fill="#383838">100</text>
<path d="M856.25 83.5 L872.25 83.5" stroke="#1a1a1a" stroke-width="1.1" fill="none"/>
<path d="M856.25 94 Q858.25 90.5 864.25 90.5 Q870.25 90.5 872.25 94" stroke="#1a1a1a" stroke-width="1.1" fill="none"/>
<path d="M864.5 90.5 L864.5 354.25" stroke="#16167e" stroke-width="1.1" fill="none"/>
<path d="M856.25 354.5 L872.25 354.5" stroke="#1a1a1a" stroke-width="1.1" fill="none"/>
<path d="M856.25 364.25 Q858.25 360.75 864.25 360.75 Q870.25 360.75 872.25 364.25" stroke="#1a1a1a" stroke-width="1.1" fill="none"/>
<path d="M866.25 348.5 L870.75 348.5" stroke="#1a1a1a" stroke-width="1.1" fill="none"/>
<path d="M868.5 346.05 L868.5 350.45" stroke="#1a1a1a" stroke-width="1.1" fill="none"/>
<path d="M864.5 360.75 L864.5 394.5 L980.25 394.5" stroke="#16167e" stroke-width="1.1" fill="none"/>
<text x="823.95" y="89.65" fill="#383838">330u</text>
<text x="823.95" y="359.9" fill="#383838">330u</text>
<path d="M864.5 80 L864.5 83.75" stroke="#16167e" stroke-width="1.1" fill="none"/>
<path d="M900.5 80 L900.5 93.75" stroke="#16167e" stroke-width="1.1" fill="none"/>
<rect x="896.8" y="94.25" width="7.4" height="22.75" fill="#fff" stroke="#1a1a1a" stroke-width="1"/>
<path d="M900.5 117.5 L900.5 180" stroke="#16167e" stroke-width="1.1" fill="none"/>
<text x="866.95" y="107.15" fill="#383838">3.6k</text>
<rect x="891.2" y="193.2" width="2.8" height="20.6" fill="#111"/>
<path d="M894 197.9 L900.5 191.3 L900.5 178" stroke="#1a1a1a" stroke-width="1.1" fill="none"/>
<path d="M894 209.1 L900.5 215.7 L900.5 225" stroke="#1a1a1a" stroke-width="1.1" fill="none"/>
<path d="M894.3 197.6 L896.16 191.57 L900.29 195.64 Z" fill="#111"/>
<path d="M900.5 222 L900.5 394.5" stroke="#16167e" stroke-width="1.1" fill="none"/>
<text x="899.45" y="207.9" fill="#383838">Q11</text>
<path d="M929.5 80 L929.5 250" stroke="#16167e" stroke-width="1.1" fill="none"/>
<rect x="920" y="256.95" width="2.8" height="20.6" fill="#111"/>
<path d="M922.8 261.65 L929.5 255.05 L929.5 248" stroke="#1a1a1a" stroke-width="1.1" fill="none"/>
<path d="M922.8 272.85 L929.5 279.45 L929.5 296" stroke="#1a1a1a" stroke-width="1.1" fill="none"/>
<path d="M928.65 278.85 L922.66 276.86 L926.82 272.82 Z" fill="#111"/>
<path d="M929.5 294.5 L929.5 347.5" stroke="#16167e" stroke-width="1.1" fill="none"/>
<rect x="925.55" y="348" width="7.4" height="22.75" fill="#fff" stroke="#1a1a1a" stroke-width="1"/>
<path d="M929.5 371.25 L929.5 394.5" stroke="#16167e" stroke-width="1.1" fill="none"/>
<text x="930.95" y="270.4" fill="#383838">Q12</text>
<text x="938.2" y="360.9" fill="#383838">3.6k</text>
<path d="M783.5 267.5 L908 267.5" stroke="#16167e" stroke-width="1.1" fill="none"/>
<path d="M908 267.5 L920 267.5" stroke="#1a1a1a" stroke-width="1.1" fill="none"/>
<path d="M850.5 267.25 L850.5 318.5 L880.25 318.5" stroke="#16167e" stroke-width="1.1" fill="none"/>
<path d="M880.5 311 L880.5 326" stroke="#1a1a1a" stroke-width="1.1" fill="none"/>
<path d="M885.5 311 L885.5 326" stroke="#1a1a1a" stroke-width="1.1" fill="none"/>
<path d="M885.5 318.5 L953.5 318.5" stroke="#16167e" stroke-width="1.1" fill="none"/>
<rect x="954" y="314.8" width="23.25" height="7.4" fill="#fff" stroke="#1a1a1a" stroke-width="1"/>
<path d="M977.75 318.5 L992.5 318.5 L992.5 294.5" stroke="#16167e" stroke-width="1.1" fill="none"/>
<text x="871.45" y="306.65" fill="#383838">47p</text>
<text x="957.7" y="332.4" fill="#383838">51</text>
<path d="M900.5 146.5 L946.5 146.5" stroke="#16167e" stroke-width="1.1" fill="none"/>
<rect x="947" y="142.8" width="23" height="7.4" fill="#fff" stroke="#1a1a1a" stroke-width="1"/>
<path d="M970.5 146.5 L1000 146.5" stroke="#16167e" stroke-width="1.1" fill="none"/>
<path d="M1000 146.5 L1011.4 146.5" stroke="#1a1a1a" stroke-width="1.1" fill="none"/>
<text x="948.45" y="138.4" fill="#383838">470</text>
<path d="M929.25 294.5 L952.75 294.5" stroke="#16167e" stroke-width="1.1" fill="none"/>
<rect x="953.25" y="290.8" width="23" height="7.4" fill="#fff" stroke="#1a1a1a" stroke-width="1"/>
<path d="M976.75 294.5 L1000 294.5" stroke="#16167e" stroke-width="1.1" fill="none"/>
<path d="M1000 294.5 L1011.4 294.5" stroke="#1a1a1a" stroke-width="1.1" fill="none"/>
<text x="956.45" y="287.4" fill="#383838">75</text>
<text x="947.7" y="220.4" fill="#8a2a2a">a</text>
<rect x="995.6" y="217.4" width="9.6" height="12.2" fill="#d8f0c8" stroke="#22c422" stroke-width="1.6"/>
<text x="996.9" y="227.6" fill="#333" style="font-size:11px">A</text>
<rect x="1021.8" y="85" width="7.4" height="22.75" fill="#fff" stroke="#1a1a1a" stroke-width="1"/>
<path d="M1025.5 80 L1025.5 84.5" stroke="#16167e" stroke-width="1.1" fill="none"/>
<text x="1033.45" y="97.9" fill="#383838">1m</text>
<path d="M1025.5 108.25 L1025.5 128.5 L1015.4 128.5" stroke="#1a1a1a" stroke-width="1.1" fill="none"/>
<path d="M1011.5 128.1 L1011.5 146.5" stroke="#1a1a1a" stroke-width="1.1" fill="none"/>
<path d="M1015.5 126.2 L1015.5 131.4" stroke="#1a1a1a" stroke-width="1.3" fill="none"/>
<path d="M1015.5 135.2 L1015.5 140.3" stroke="#1a1a1a" stroke-width="1.3" fill="none"/>
<path d="M1015.5 144 L1015.5 149.7" stroke="#1a1a1a" stroke-width="1.3" fill="none"/>
<path d="M1015.4 137.5 L1025.5 137.5 L1025.5 146.5 L1015.4 146.5" stroke="#1a1a1a" stroke-width="1.1" fill="none"/>
<path d="M1016.2 137.7 L1022.40 134.30 L1022.40 141.10 Z" fill="#111"/>
<text x="1041.7" y="132.9" fill="#383838">Q13</text>
<text x="1030.45" y="146.65" fill="#383838">2SK1058</text>
<path d="M1025.5 150 L1025.5 290" stroke="#16167e" stroke-width="1.1" fill="none"/>
<path d="M1011.5 294.5 L1011.5 312.5" stroke="#1a1a1a" stroke-width="1.1" fill="none"/>
<path d="M1015.5 290.7 L1015.5 296.5" stroke="#1a1a1a" stroke-width="1.3" fill="none"/>
<path d="M1015.5 299.7 L1015.5 305.2" stroke="#1a1a1a" stroke-width="1.3" fill="none"/>
<path d="M1015.5 309 L1015.5 315" stroke="#1a1a1a" stroke-width="1.3" fill="none"/>
<path d="M1015.4 293.5 L1025.5 293.5 L1025.5 302.5 L1015.4 302.5" stroke="#1a1a1a" stroke-width="1.1" fill="none"/>
<path d="M1025 302.5 L1018.80 305.90 L1018.80 299.10 Z" fill="#111"/>
<path d="M1015.4 312.5 L1025.5 312.5 L1025.5 325" stroke="#1a1a1a" stroke-width="1.1" fill="none"/>
<path d="M1025.5 325 L1025.5 345.5" stroke="#16167e" stroke-width="1.1" fill="none"/>
<rect x="1021.8" y="346" width="7.4" height="22.75" fill="#fff" stroke="#1a1a1a" stroke-width="1"/>
<path d="M1025.5 369.25 L1025.5 394.5" stroke="#16167e" stroke-width="1.1" fill="none"/>
<text x="1037.7" y="292.9" fill="#383838">Q14</text>
<text x="1032.2" y="307.15" fill="#383838">2SJ192</text>
<text x="1033.45" y="358.65" fill="#383838">1m</text>
<rect x="980.75" y="390.8" width="23.5" height="7.4" fill="#fff" stroke="#1a1a1a" stroke-width="1"/>
<path d="M1004.75 394.5 L1047.5 394.5" stroke="#16167e" stroke-width="1.1" fill="none"/>
<circle cx="1050" cy="394.5" r="2.4" fill="#fff" stroke="#1a1a1a" stroke-width="1"/>
<text x="977.7" y="386.65" fill="#383838">2.2k</text>
<text x="1039.45" y="386.65" fill="#383838">-33V</text>
<path d="M1025.5 198.5 L1049.25 198.5" stroke="#16167e" stroke-width="1.1" fill="none"/>
<rect x="1049.75" y="194.8" width="23.5" height="7.4" fill="#fff" stroke="#1a1a1a" stroke-width="1"/>
<path d="M1073.75 198.5 L1123.75 198.5" stroke="#16167e" stroke-width="1.1" fill="none"/>
<path d="M1123.5 191 L1123.5 206" stroke="#1a1a1a" stroke-width="1.1" fill="none"/>
<path d="M1129.5 191 L1129.5 206" stroke="#1a1a1a" stroke-width="1.1" fill="none"/>
<path d="M1129.5 198.5 L1170.5 198.5 L1170.5 282" stroke="#16167e" stroke-width="1.1" fill="none"/>
<text x="1054.95" y="190.4" fill="#383838">10</text>
<text x="1115.45" y="187.9" fill="#383838">47n</text>
<path d="M1025.5 225.5 L1042.5 225.5" stroke="#1a1a1a" stroke-width="1.1" fill="none"/>
<path d="M1042.5 225.5 C1042.5 216.92 1051 216.92 1051 225.5 C1051 216.92 1059.5 216.92 1059.5 225.5 C1059.5 216.92 1068 216.92 1068 225.5" stroke="#15153a" stroke-width="1.1" fill="none"/>
<path d="M1068 225.5 L1078 225.5" stroke="#1a1a1a" stroke-width="1.1" fill="none"/>
<path d="M1078 225.5 L1124.25 225.5" stroke="#16167e" stroke-width="1.1" fill="none"/>
<rect x="1124.75" y="221.8" width="23.5" height="7.4" fill="#fff" stroke="#1a1a1a" stroke-width="1"/>
<path d="M1148.75 225.5 L1170.5 225.5" stroke="#16167e" stroke-width="1.1" fill="none"/>
<text x="1042.2" y="235.9" fill="#383838">400n</text>
<text x="1132.45" y="218.4" fill="#383838">8</text>
<path d="M1097.5 225.5 L1097.5 263.5 L1130 263.5" stroke="#16167e" stroke-width="1.1" fill="none"/>
<path d="M1130.5 256 L1130.5 271.5" stroke="#1a1a1a" stroke-width="1.1" fill="none"/>
<path d="M1135.5 256 L1135.5 271.5" stroke="#1a1a1a" stroke-width="1.1" fill="none"/>
<path d="M1135.75 263.5 L1170.5 263.5" stroke="#16167e" stroke-width="1.1" fill="none"/>
<text x="1122.95" y="252.4" fill="#383838">1p</text>
<text x="1120.95" y="281.65" fill="#383838">C10</text>
<path d="M1161.5 282.5 L1179.5 282.5" stroke="#1a1a1a" stroke-width="1.1" fill="none"/>
<path d="M1165.2 286.5 L1175.8 286.5" stroke="#1a1a1a" stroke-width="1.1" fill="none"/>
<path d="M1168.3 290.5 L1172.7 290.5" stroke="#1a1a1a" stroke-width="1.1" fill="none"/>
<path d="M1025.5 269.5 L1081.5 269.5 L1081.5 412.5 L862.5 412.5 L862.5 485.5 L953.5 485.5" stroke="#16167e" stroke-width="1.1" fill="none"/>
<path d="M876.5 435.5 L876.5 438.75" stroke="#1a1a1a" stroke-width="1.1" fill="none"/>
<path d="M880.5 433 L880.5 441.25" stroke="#1a1a1a" stroke-width="1.1" fill="none"/>
<path d="M884.5 428 L884.5 445.5" stroke="#1a1a1a" stroke-width="1.1" fill="none"/>
<path d="M884.25 437.5 L898 437.5" stroke="#1a1a1a" stroke-width="1.1" fill="none"/>
<rect x="898.5" y="433.8" width="23.75" height="7.4" fill="#fff" stroke="#1a1a1a" stroke-width="1"/>
<path d="M922.75 437.5 L956.5 437.5" stroke="#16167e" stroke-width="1.1" fill="none"/>
<rect x="957" y="433.8" width="23" height="7.4" fill="#fff" stroke="#1a1a1a" stroke-width="1"/>
<path d="M980.5 437.5 L999.5 437.5 L999.5 479.25" stroke="#16167e" stroke-width="1.1" fill="none"/>
<path d="M939.5 437.5 L939.5 473.5 L953.5 473.5" stroke="#16167e" stroke-width="1.1" fill="none"/>
<text x="903.2" y="429.9" fill="#383838">1k</text>
<text x="960.95" y="429.9" fill="#383838">1k</text>
<path d="M953.5 464.5 L953.5 494.5 L977.75 479.25 Z" fill="#fff" stroke="#1a1a1a" stroke-width="1.1"/>
<path d="M956.2 473.5 L960.5 473.5" stroke="#1a1a1a" stroke-width="1.2" fill="none"/>
<path d="M956 485.5 H961 M958.5 483 V488" stroke="#b02020" stroke-width="1.2"/>
<path d="M977.75 479.5 L1023.5 479.5" stroke="#16167e" stroke-width="1.1" fill="none"/>
<rect x="1024" y="475.8" width="23.25" height="7.4" fill="#fff" stroke="#1a1a1a" stroke-width="1"/>
<path d="M1047.75 479.5 L1080 479.5" stroke="#16167e" stroke-width="1.1" fill="none"/>
<path d="M1080 479.5 L1088.75 479.5" stroke="#1a1a1a" stroke-width="1.1" fill="none"/>
<path d="M1088.75 479.25 C1088.75 471.19 1096.67 471.19 1096.67 479.25 C1096.67 471.19 1104.58 471.19 1104.58 479.25 C1104.58 471.19 1112.5 471.19 1112.5 479.25" stroke="#15153a" stroke-width="1.1" fill="none"/>
<path d="M1112.5 479.5 L1120 479.5" stroke="#1a1a1a" stroke-width="1.1" fill="none"/>
<path d="M1120 479.5 L1167.5 479.5" stroke="#16167e" stroke-width="1.1" fill="none"/>
<text x="1025.2" y="471.65" fill="#383838">600</text>
<text x="1082.45" y="469.15" fill="#383838">9.55m</text>
<text x="1079.2" y="431.15" fill="#383838">26.53n</text>
<path d="M1065.5 479.25 L1065.5 442.5 L1098 442.5" stroke="#16167e" stroke-width="1.1" fill="none"/>
<path d="M1098.5 435 L1098.5 450" stroke="#1a1a1a" stroke-width="1.1" fill="none"/>
<path d="M1103.5 435 L1103.5 450" stroke="#1a1a1a" stroke-width="1.1" fill="none"/>
<path d="M1103.75 442.5 L1167.5 442.5 L1167.5 495" stroke="#16167e" stroke-width="1.1" fill="none"/>
<path d="M1167.5 495 C1166 499 1161 496 1160.5 501" stroke="#1a1a1a" stroke-width="1.1" fill="none"/>
<path d="M1140.5 479.25 L1140.5 506" stroke="#16167e" stroke-width="1.1" fill="none"/>
<rect x="1145" y="434.5" width="11.2" height="13" fill="#f2f032"/>
<text x="1147.3" y="445" fill="#333" style="font-size:11px">B</text>
<text x="1169.2" y="462.15" fill="#8a2a2a">nocht</text>
<text x="1174.2" y="507.2" fill="#383838">9.55m</text>
<circle cx="783.5" cy="203.5" r="2.7" fill="#0c0c5a"/>
<circle cx="783.5" cy="267.25" r="2.7" fill="#0c0c5a"/>
<circle cx="849.25" cy="203.5" r="2.7" fill="#0c0c5a"/>
<circle cx="850.5" cy="267.25" r="2.7" fill="#0c0c5a"/>
<circle cx="824.25" cy="225.5" r="2.7" fill="#0c0c5a"/>
<circle cx="864.25" cy="225.5" r="2.7" fill="#0c0c5a"/>
<circle cx="900.5" cy="146.5" r="2.7" fill="#0c0c5a"/>
<circle cx="991.5" cy="146.5" r="2.7" fill="#0c0c5a"/>
<circle cx="929.25" cy="294.5" r="2.7" fill="#0c0c5a"/>
<circle cx="992.25" cy="294.5" r="2.7" fill="#0c0c5a"/>
<circle cx="900.5" cy="394.5" r="2.7" fill="#0c0c5a"/>
<circle cx="929.25" cy="394.5" r="2.7" fill="#0c0c5a"/>
<circle cx="1025.5" cy="394.5" r="2.7" fill="#0c0c5a"/>
<circle cx="1025.5" cy="198.5" r="2.7" fill="#0c0c5a"/>
<circle cx="1025.5" cy="225.5" r="2.7" fill="#0c0c5a"/>
<circle cx="1025.5" cy="269.5" r="2.7" fill="#0c0c5a"/>
<circle cx="1097.5" cy="225.5" r="2.7" fill="#0c0c5a"/>
<circle cx="1170.5" cy="225.5" r="2.7" fill="#0c0c5a"/>
<circle cx="1170.5" cy="263.75" r="2.7" fill="#0c0c5a"/>
<circle cx="939.25" cy="437.5" r="2.7" fill="#0c0c5a"/>
<circle cx="999.25" cy="479.25" r="2.7" fill="#0c0c5a"/>
<circle cx="1065" cy="479.25" r="2.7" fill="#0c0c5a"/>
<circle cx="1140.5" cy="479.25" r="2.7" fill="#0c0c5a"/>
<circle cx="1167.5" cy="479.25" r="2.7" fill="#0c0c5a"/>
<circle cx="1025.5" cy="146.5" r="2.7" fill="#111"/>
<circle cx="1025.5" cy="293.75" r="2.7" fill="#111"/>
</svg></div>
<div style="left:176px;top:502px;width:1086px;height:17px;background:#f6f5f0"></div>
<div style="left:1261px;top:82px;width:17px;height:420px;background:#f6f5f0"></div>
<div style="left:1262px;top:502px;width:18px;height:17px;background:#ece9d8"></div>
<div class="xsb" style="left:177px;top:503px;width:16px;height:16px"><svg style="left:0;top:0" width="14" height="14" viewBox="0 0 14 14"><path d="M8.6 3 L4.6 7 L8.6 11" stroke="#4d6185" stroke-width="2" fill="none"/></svg></div><div class="xsb" style="left:1244px;top:503px;width:16px;height:16px"><svg style="left:0;top:0" width="14" height="14" viewBox="0 0 14 14"><path d="M5.4 3 L9.4 7 L5.4 11" stroke="#4d6185" stroke-width="2" fill="none"/></svg></div>
<div class="xsb" style="left:194px;top:503px;width:327px;height:16px"><svg style="left:158px;top:3px" width="10" height="9" viewBox="0 0 10 9"><path d="M1.5 0.5 V8 M3.5 0.5 V8 M5.5 0.5 V8 M7.5 0.5 V8" stroke="#8ea6e0" stroke-width="1"/></svg></div>
<div class="xsb" style="left:1262px;top:83.5px;width:16px;height:16px"><svg style="left:0;top:0" width="14" height="14" viewBox="0 0 14 14"><path d="M3 8.6 L7 4.6 L11 8.6" stroke="#4d6185" stroke-width="2" fill="none"/></svg></div><div class="xsb" style="left:1262px;top:484.8px;width:16px;height:16px"><svg style="left:0;top:0" width="14" height="14" viewBox="0 0 14 14"><path d="M3 5.4 L7 9.4 L11 5.4" stroke="#4d6185" stroke-width="2" fill="none"/></svg></div>
<div class="xsb" style="left:1262px;top:120px;width:16px;height:45px"><svg style="left:3px;top:17px" width="9" height="10" viewBox="0 0 9 10"><path d="M0.5 1.5 H8 M0.5 3.5 H8 M0.5 5.5 H8 M0.5 7.5 H8" stroke="#8ea6e0" stroke-width="1"/></svg></div>
<div style="left:176px;top:519px;width:1102px;height:1px;background:#bcbaae"></div>
<div style="left:176px;top:520px;width:1102px;height:5px;background:#f0efe6"></div>
<div style="left:176px;top:525px;width:1102px;height:1px;background:#b4b2a6"></div>
<div style="left:176px;top:526px;width:1102px;height:2px;background:#fbfaf6"></div>
<div style="left:1278px;top:528px;width:2px;height:450px;background:#f2f1e8"></div>
<div id="wavv"><svg class="wav" width="1102" height="404" viewBox="176 528 1102 404" style="font-family:'Liberation Sans',sans-serif;font-size:10.8px;letter-spacing:0">
<path d="M306.5 548.5 V908.5 M411.5 548.5 V908.5 M515.5 548.5 V908.5 M620.5 548.5 V908.5 M725.5 548.5 V908.5 M829.5 548.5 V908.5 M934.5 548.5 V908.5 M1039.5 548.5 V908.5 M1143.5 548.5 V908.5 M1248.5 548.5 V908.5 M306.5 548.5 H1248.5 M306.5 593.5 H1248.5 M306.5 637.5 H1248.5 M306.5 681.5 H1248.5 M306.5 726.5 H1248.5 M306.5 770.5 H1248.5 M306.5 814.5 H1248.5 M306.5 859.5 H1248.5 M306.5 903.5 H1248.5 " stroke="#b2b2b2" stroke-width="1" fill="none"/>
<path d="M306.5 557.5 h6.5 M306.5 566.5 h6.5 M306.5 575.5 h6.5 M306.5 584.5 h6.5 M306.5 602.5 h6.5 M306.5 611.5 h6.5 M306.5 620.5 h6.5 M306.5 629.5 h6.5 M306.5 646.5 h6.5 M306.5 655.5 h6.5 M306.5 664.5 h6.5 M306.5 673.5 h6.5 M306.5 690.5 h6.5 M306.5 699.5 h6.5 M306.5 708.5 h6.5 M306.5 717.5 h6.5 M306.5 735.5 h6.5 M306.5 744.5 h6.5 M306.5 753.5 h6.5 M306.5 762.5 h6.5 M306.5 779.5 h6.5 M306.5 788.5 h6.5 M306.5 797.5 h6.5 M306.5 806.5 h6.5 M306.5 823.5 h6.5 M306.5 832.5 h6.5 M306.5 841.5 h6.5 M306.5 850.5 h6.5 M306.5 868.5 h6.5 M306.5 877.5 h6.5 M306.5 886.5 h6.5 M306.5 895.5 h6.5 M327.5 903.5 v-6.8 M348.5 903.5 v-6.8 M369.5 903.5 v-6.8 M390.5 903.5 v-6.8 M432.5 903.5 v-6.8 M453.5 903.5 v-6.8 M474.5 903.5 v-6.8 M495.5 903.5 v-6.8 M536.5 903.5 v-6.8 M557.5 903.5 v-6.8 M578.5 903.5 v-6.8 M599.5 903.5 v-6.8 M641.5 903.5 v-6.8 M662.5 903.5 v-6.8 M683.5 903.5 v-6.8 M704.5 903.5 v-6.8 M746.5 903.5 v-6.8 M767.5 903.5 v-6.8 M788.5 903.5 v-6.8 M809.5 903.5 v-6.8 M850.5 903.5 v-6.8 M871.5 903.5 v-6.8 M892.5 903.5 v-6.8 M913.5 903.5 v-6.8 M955.5 903.5 v-6.8 M976.5 903.5 v-6.8 M997.5 903.5 v-6.8 M1018.5 903.5 v-6.8 M1060.5 903.5 v-6.8 M1081.5 903.5 v-6.8 M1102.5 903.5 v-6.8 M1123.5 903.5 v-6.8 M1164.5 903.5 v-6.8 M1185.5 903.5 v-6.8 M1206.5 903.5 v-6.8 M1227.5 903.5 v-6.8 " stroke="#b4b4b4" stroke-width="1" fill="none"/>
<rect x="448" y="577.2" width="71.8" height="55.3" fill="#fff"/>
<g fill="#cc3434" style="font-size:15.8px"><text x="451.8" y="591.4">0.0011%</text><text x="457.5" y="609.6">10kHz</text><text x="451.8" y="627.4">20W/8R</text></g>
<path d="M306.4 558.3 L309.4 557.9 L312.4 557.8 L315.4 558.1 L318.4 558.7 L321.4 559.6 L324.4 560.9 L327.4 562.6 L330.4 564.5 L333.4 566.8 L336.4 569.4 L339.4 572.3 L342.4 575.5 L345.4 579.0 L348.4 582.9 L351.4 587.0 L354.4 591.4 L357.4 596.0 L360.4 601.0 L363.4 606.1 L366.4 611.6 L369.4 617.2 L372.4 623.1 L375.4 629.2 L378.4 635.4 L381.4 641.9 L384.4 648.5 L387.4 655.3 L390.4 662.2 L393.4 669.3 L396.4 676.5 L399.4 683.7 L402.4 691.1 L405.4 698.5 L408.4 706.0 L411.4 713.5 L414.4 721.0 L417.4 728.6 L420.4 736.1 L423.4 743.6 L426.4 751.1 L429.4 758.6 L432.4 765.9 L435.4 773.2 L438.4 780.4 L441.4 787.5 L444.4 794.4 L447.4 801.2 L450.4 807.9 L453.4 814.4 L456.4 820.7 L459.4 826.8 L462.4 832.7 L465.4 838.4 L468.4 843.9 L471.4 849.1 L474.4 854.1 L477.4 858.8 L480.4 863.2 L483.4 867.4 L486.4 871.3 L489.4 874.9 L492.4 878.1 L495.4 881.1 L498.4 883.8 L501.4 886.1 L504.4 888.1 L507.4 889.8 L510.4 891.1 L513.4 892.2 L516.4 892.8 L519.4 893.2 L522.4 893.2 L525.4 892.8 L528.4 892.1 L531.4 891.1 L534.4 889.7 L537.4 888.1 L540.4 886.0 L543.4 883.7 L546.4 881.0 L549.4 878.0 L552.4 874.8 L555.4 871.2 L558.4 867.3 L561.4 863.1 L564.4 858.6 L567.4 853.9 L570.4 848.9 L573.4 843.7 L576.4 838.2 L579.4 832.5 L582.4 826.6 L585.4 820.5 L588.4 814.2 L591.4 807.7 L594.4 801.0 L597.4 794.2 L600.4 787.2 L603.4 780.2 L606.4 773.0 L609.4 765.7 L612.4 758.3 L615.4 750.9 L618.4 743.4 L621.4 735.9 L624.4 728.3 L627.4 720.8 L630.4 713.2 L633.4 705.7 L636.4 698.3 L639.4 690.8 L642.4 683.5 L645.4 676.2 L648.4 669.1 L651.4 662.0 L654.4 655.1 L657.4 648.3 L660.4 641.7 L663.4 635.2 L666.4 629.0 L669.4 622.9 L672.4 617.0 L675.4 611.4 L678.4 606.0 L681.4 600.8 L684.4 595.9 L687.4 591.2 L690.4 586.8 L693.4 582.7 L696.4 578.9 L699.4 575.4 L702.4 572.2 L705.4 569.3 L708.4 566.7 L711.4 564.4 L714.4 562.5 L717.4 560.9 L720.4 559.6 L723.4 558.7 L726.4 558.1 L729.4 557.8 L732.4 557.9 L735.4 558.3 L738.4 559.1 L741.4 560.2 L744.4 561.6 L747.4 563.4 L750.4 565.4 L753.4 567.9 L756.4 570.6 L759.4 573.6 L762.4 577.0 L765.4 580.7 L768.4 584.6 L771.4 588.8 L774.4 593.4 L777.4 598.1 L780.4 603.2 L783.4 608.5 L786.4 614.0 L789.4 619.7 L792.4 625.7 L795.4 631.9 L798.4 638.2 L801.4 644.8 L804.4 651.5 L807.4 658.3 L810.4 665.3 L813.4 672.4 L816.4 679.6 L819.4 686.9 L822.4 694.3 L825.4 701.7 L828.4 709.2 L831.4 716.8 L834.4 724.3 L837.4 731.9 L840.4 739.4 L843.4 746.9 L846.4 754.4 L849.4 761.8 L852.4 769.1 L855.4 776.3 L858.4 783.5 L861.4 790.5 L864.4 797.4 L867.4 804.1 L870.4 810.7 L873.4 817.1 L876.4 823.4 L879.4 829.4 L882.4 835.2 L885.4 840.8 L888.4 846.2 L891.4 851.3 L894.4 856.2 L897.4 860.8 L900.4 865.1 L903.4 869.1 L906.4 872.9 L909.4 876.3 L912.4 879.5 L915.4 882.3 L918.4 884.8 L921.4 887.0 L924.4 888.9 L927.4 890.4 L930.4 891.6 L933.4 892.5 L936.4 893.0 L939.4 893.2 L942.4 893.0 L945.4 892.6 L948.4 891.7 L951.4 890.6 L954.4 889.1 L957.4 887.2 L960.4 885.1 L963.4 882.6 L966.4 879.8 L969.4 876.7 L972.4 873.2 L975.4 869.5 L978.4 865.5 L981.4 861.2 L984.4 856.6 L987.4 851.8 L990.4 846.7 L993.4 841.4 L996.4 835.8 L999.4 830.0 L1002.4 824.0 L1005.4 817.8 L1008.4 811.4 L1011.4 804.8 L1014.4 798.1 L1017.4 791.2 L1020.4 784.2 L1023.4 777.1 L1026.4 769.8 L1029.4 762.5 L1032.4 755.1 L1035.4 747.6 L1038.4 740.1 L1041.4 732.6 L1044.4 725.1 L1047.4 717.5 L1050.4 710.0 L1053.4 702.5 L1056.4 695.0 L1059.4 687.6 L1062.4 680.3 L1065.4 673.1 L1068.4 666.0 L1071.4 659.0 L1074.4 652.1 L1077.4 645.4 L1080.4 638.9 L1083.4 632.5 L1086.4 626.3 L1089.4 620.3 L1092.4 614.6 L1095.4 609.0 L1098.4 603.7 L1101.4 598.6 L1104.4 593.8 L1107.4 589.3 L1110.4 585.0 L1113.4 581.0 L1116.4 577.4 L1119.4 574.0 L1122.4 570.9 L1125.4 568.1 L1128.4 565.7 L1131.4 563.5 L1134.4 561.8 L1137.4 560.3 L1140.4 559.2 L1143.4 558.4 L1146.4 557.9 L1149.4 557.8 L1152.4 558.0 L1155.4 558.6 L1158.4 559.5 L1161.4 560.7 L1164.4 562.3 L1167.4 564.2 L1170.4 566.5 L1173.4 569.0 L1176.4 571.9 L1179.4 575.1 L1182.4 578.5 L1185.4 582.3 L1188.4 586.4 L1191.4 590.8 L1194.4 595.4 L1197.4 600.3 L1200.4 605.4 L1203.4 610.8 L1206.4 616.5 L1209.4 622.3 L1212.4 628.3 L1215.4 634.6 L1218.4 641.0 L1221.4 647.6 L1224.4 654.4 L1227.4 661.3 L1230.4 668.3 L1233.4 675.5 L1236.4 682.8 L1239.4 690.1 L1242.4 697.5 L1245.4 705.0 L1248.4 712.5" stroke="#34e03a" stroke-width="2.4" fill="none" stroke-linejoin="round"/>
<path d="M306.4 728.5 L307.1 724.0 L307.8 720.7 L308.5 715.4 L309.2 712.1 L309.9 708.0 L310.6 703.8 L311.3 701.2 L312.0 697.2 L312.7 695.0 L313.4 691.5 L314.1 688.8 L314.8 686.7 L315.5 684.8 L316.2 681.0 L316.9 678.7 L317.6 677.1 L318.3 675.4 L319.0 672.5 L319.7 669.9 L320.4 668.9 L321.1 665.2 L321.8 664.8 L322.5 662.0 L323.2 660.0 L323.9 658.5 L324.6 657.3 L325.3 656.7 L326.0 654.0 L326.7 653.3 L327.4 652.4 L328.1 650.4 L328.8 650.0 L329.5 647.7 L330.2 647.1 L330.9 647.0 L331.6 647.8 L332.3 646.4 L333.0 645.5 L333.7 645.7 L334.4 645.0 L335.1 644.3 L335.8 645.8 L336.5 645.7 L337.2 644.7 L337.9 646.3 L338.6 646.8 L339.3 648.4 L340.0 648.6 L340.7 647.8 L341.4 650.5 L342.1 648.7 L342.8 650.4 L343.5 652.4 L344.2 651.7 L344.9 653.9 L345.6 654.4 L346.3 656.9 L347.0 658.3 L347.7 659.3 L348.4 661.2 L349.1 661.5 L349.8 663.6 L350.5 664.9 L351.2 666.5 L351.9 667.9 L352.6 670.4 L353.3 672.4 L354.0 673.4 L354.7 675.5 L355.4 676.2 L356.1 679.2 L356.8 680.9 L357.5 683.4 L358.2 685.0 L358.9 686.1 L359.6 688.2 L360.3 690.8 L361.0 691.7 L361.7 694.6 L362.4 696.2 L363.1 698.2 L363.8 700.1 L364.5 703.4 L365.2 704.3 L365.9 706.6 L366.6 708.8 L367.3 711.7 L368.0 712.3 L368.7 714.9 L369.4 717.1 L370.1 719.7 L370.8 721.6 L371.5 723.6 L372.2 724.5 L372.9 726.6 L373.6 728.4 L374.3 731.1 L375.0 733.1 L375.7 733.4 L376.4 735.3 L377.1 737.2 L377.8 739.0 L378.5 741.2 L379.2 743.1 L379.9 744.1 L380.6 745.1 L381.3 747.4 L382.0 748.7 L382.7 750.5 L383.4 752.6 L384.1 753.5 L384.8 754.7 L385.5 756.6 L386.2 758.0 L386.9 759.0 L387.6 762.6 L388.3 764.5 L389.0 781.3 L389.7 782.5 L390.4 783.1 L391.1 784.4 L391.8 785.2 L392.5 787.5 L393.2 787.8 L393.9 789.2 L394.6 790.8 L395.3 792.1 L396.0 793.8 L396.7 794.7 L397.4 796.0 L398.1 797.6 L398.8 798.9 L399.5 800.8 L400.2 801.4 L400.9 804.2 L401.6 804.8 L402.3 805.1 L403.0 806.2 L403.7 807.4 L404.4 808.3 L405.1 808.8 L405.8 811.1 L406.5 812.1 L407.2 811.9 L407.9 812.5 L408.6 812.4 L409.3 812.8 L410.0 813.6 L410.7 813.8 L411.4 815.2 L412.1 814.3 L412.8 814.4 L413.5 816.5 L414.2 816.1 L414.9 815.6 L415.6 816.4 L416.3 815.4 L417.0 816.2 L417.7 816.8 L418.4 816.2 L419.1 815.5 L419.8 814.3 L420.5 814.1 L421.2 813.3 L421.9 814.0 L422.6 813.0 L423.3 812.8 L424.0 811.2 L424.7 810.1 L425.4 810.1 L426.1 809.3 L426.8 808.0 L427.5 806.7 L428.2 805.4 L428.9 803.8 L429.6 801.2 L430.3 800.1 L431.0 797.9 L431.7 795.4 L432.4 793.4 L433.1 791.9 L433.8 789.8 L434.5 788.4 L435.2 786.7 L435.9 783.5 L436.6 786.7 L437.3 785.2 L438.0 782.9 L438.7 773.9 L439.4 770.5 L440.1 768.9 L440.8 766.9 L441.5 768.4 L442.2 767.6 L442.9 766.4 L443.6 764.6 L444.3 762.2 L445.0 760.7 L445.7 759.2 L446.4 756.0 L447.1 755.2 L447.8 753.7 L448.5 751.6 L449.2 749.7 L449.9 747.3 L450.6 744.9 L451.3 744.1 L452.0 741.4 L452.7 740.4 L453.4 738.8 L454.1 735.9 L454.8 734.0 L455.5 733.1 L456.2 730.8 L456.9 728.0 L457.6 726.0 L458.3 724.2 L459.0 723.7 L459.7 721.7 L460.4 718.6 L461.1 718.0 L461.8 716.4 L462.5 714.1 L463.2 711.8 L463.9 710.5 L464.6 708.0 L465.3 706.2 L466.0 706.4 L466.7 704.2 L467.4 702.4 L468.1 701.6 L468.8 699.1 L469.5 698.4 L470.2 697.6 L470.9 693.4 L471.6 692.3 L472.3 691.2 L473.0 689.9 L473.7 690.4 L474.4 688.0 L475.1 687.8 L475.8 685.6 L476.5 688.2 L477.2 684.8 L477.9 684.4 L478.6 684.1 L479.3 684.8 L480.0 682.0 L480.7 683.6 L481.4 681.3 L482.1 680.9 L482.8 680.4 L483.5 677.7 L484.2 679.1 L484.9 677.7 L485.6 676.7 L486.3 680.2 L487.0 677.5 L487.7 679.0 L488.4 680.4 L489.1 680.0 L489.8 679.3 L490.5 680.4 L491.2 680.9 L491.9 682.2 L492.6 679.8 L493.3 682.3 L494.0 681.6 L494.7 682.5 L495.4 685.7 L496.1 685.5 L496.8 686.7 L497.5 688.6 L498.2 690.3 L498.9 689.2 L499.6 691.0 L500.3 691.7 L501.0 693.0 L501.7 694.7 L502.4 695.7 L503.1 697.4 L503.8 698.9 L504.5 701.4 L505.2 702.5 L505.9 704.4 L506.6 706.2 L507.3 706.6 L508.0 709.0 L508.7 711.5 L509.4 713.2 L510.1 714.0 L510.8 716.1 L511.5 718.7 L512.2 720.2 L512.9 722.6 L513.6 724.5 L514.3 727.8 L515.0 730.3 L515.7 732.9 L516.4 734.0 L517.1 737.6 L517.8 740.0 L518.5 741.6 L519.2 745.5 L519.9 748.0 L520.6 749.0 L521.3 752.4 L522.0 753.5 L522.7 755.6 L523.4 758.3 L524.1 759.9 L524.8 760.5 L525.5 762.9 L526.2 764.7 L526.9 766.1 L527.6 767.4 L528.3 769.1 L529.0 771.2 L529.7 771.2 L530.4 773.5 L531.1 774.6 L531.8 775.1 L532.5 776.9 L533.2 778.5 L533.9 779.3 L534.6 779.4 L535.3 781.9 L536.0 782.3 L536.7 783.3 L537.4 782.4 L538.1 782.2 L538.8 781.3 L539.5 787.0 L540.2 784.0 L540.9 783.5 L541.6 785.9 L542.3 789.6 L543.0 789.3 L543.7 785.7 L544.4 785.2 L545.1 790.9 L545.8 788.7 L546.5 789.7 L547.2 785.3 L547.9 784.8 L548.6 788.7 L549.3 786.2 L550.0 782.8 L550.7 787.9 L551.4 784.8 L552.1 785.1 L552.8 779.1 L553.5 783.5 L554.2 777.1 L554.9 781.7 L555.6 777.8 L556.3 776.0 L557.0 776.5 L557.7 778.2 L558.4 772.6 L559.1 770.6 L559.8 772.4 L560.5 769.7 L561.2 767.9 L561.9 767.0 L562.6 765.1 L563.3 764.6 L564.0 763.8 L564.7 762.4 L565.4 763.5 L566.1 759.5 L566.8 759.2 L567.5 756.0 L568.2 755.6 L568.9 752.3 L569.6 752.2 L570.3 749.5 L571.0 752.2 L571.7 749.7 L572.4 746.3 L573.1 746.5 L573.8 747.7 L574.5 741.7 L575.2 744.3 L575.9 740.7 L576.6 739.6 L577.3 740.1 L578.0 736.2 L578.7 735.5 L579.4 735.1 L580.1 735.4 L580.8 730.5 L581.5 731.9 L582.2 730.0 L582.9 728.4 L583.6 725.9 L584.3 724.4 L585.0 721.6 L585.7 720.8 L586.4 719.4 L587.1 722.0 L587.8 718.3 L588.5 716.8 L589.2 715.4 L589.9 718.7 L590.6 717.9 L591.3 715.9 L592.0 712.8 L592.7 711.6 L593.4 711.0 L594.1 711.1 L594.8 708.5 L595.5 709.3 L596.2 707.4 L596.9 710.5 L597.6 709.7 L598.3 706.5 L599.0 704.0 L599.7 704.0 L600.4 695.0 L601.1 691.2 L601.8 690.0 L602.5 690.2 L603.2 689.9 L603.9 689.4 L604.6 688.3 L605.3 688.3 L606.0 686.9 L606.7 686.8 L607.4 685.9 L608.1 685.9 L608.8 684.7 L609.5 684.1 L610.2 684.1 L610.9 683.6 L611.6 683.9 L612.3 683.5 L613.0 683.7 L613.7 683.3 L614.4 683.3 L615.1 683.4 L615.8 682.3 L616.5 682.0 L617.2 683.1 L617.9 681.4 L618.6 682.4 L619.3 682.3 L620.0 681.3 L620.7 682.9 L621.4 683.3 L622.1 683.3 L622.8 683.9 L623.5 684.4 L624.2 683.6 L624.9 684.7 L625.6 685.0 L626.3 686.3 L627.0 686.9 L627.7 687.9 L628.4 688.4 L629.1 690.0 L629.8 690.9 L630.5 692.1 L631.2 692.4 L631.9 693.3 L632.6 694.7 L633.3 696.3 L634.0 697.3 L634.7 700.1 L635.4 701.2 L636.1 703.0 L636.8 704.9 L637.5 706.8 L638.2 708.4 L638.9 709.4 L639.6 712.7 L640.3 714.8 L641.0 716.6 L641.7 719.2 L642.4 721.9 L643.1 723.6 L643.8 727.6 L644.5 727.0 L645.2 727.3 L645.9 732.0 L646.6 739.7 L647.3 735.5 L648.0 743.7 L648.7 748.3 L649.4 744.3 L650.1 745.8 L650.8 747.8 L651.5 750.0 L652.2 751.9 L652.9 753.5 L653.6 755.4 L654.3 756.3 L655.0 758.3 L655.7 760.3 L656.4 763.1 L657.1 764.2 L657.8 766.5 L658.5 767.4 L659.2 769.3 L659.9 771.6 L660.6 774.2 L661.3 776.0 L662.0 777.9 L662.7 779.0 L663.4 781.3 L664.1 783.0 L664.8 784.7 L665.5 785.8 L666.2 788.9 L666.9 789.3 L667.6 792.4 L668.3 793.9 L669.0 793.9 L669.7 796.3 L670.4 798.5 L671.1 800.4 L671.8 800.9 L672.5 802.1 L673.2 803.3 L673.9 806.1 L674.6 806.1 L675.3 808.2 L676.0 808.8 L676.7 810.8 L677.4 812.9 L678.1 812.7 L678.8 815.2 L679.5 815.8 L680.2 817.7 L680.9 818.5 L681.6 818.9 L682.3 821.2 L683.0 821.5 L683.7 820.6 L684.4 821.4 L685.1 824.1 L685.8 824.7 L686.5 824.6 L687.2 824.6 L687.9 826.0 L688.6 826.4 L689.3 828.9 L690.0 825.8 L690.7 828.8 L691.4 829.0 L692.1 825.9 L692.8 828.5 L693.5 827.1 L694.2 827.2 L694.9 824.2 L695.6 823.9 L696.3 823.1 L697.0 824.7 L697.7 821.9 L698.4 820.2 L699.1 818.9 L699.8 817.2 L700.5 815.4 L701.2 814.1 L701.9 814.1 L702.6 811.4 L703.3 810.8 L704.0 807.6 L704.7 805.6 L705.4 803.8 L706.1 800.9 L706.8 798.9 L707.5 797.5 L708.2 795.1 L708.9 792.5 L709.6 789.8 L710.3 787.8 L711.0 785.4 L711.7 782.1 L712.4 779.9 L713.1 776.1 L713.8 774.8 L714.5 771.7 L715.2 769.6 L715.9 766.7 L716.6 763.2 L717.3 759.9 L718.0 758.6 L718.7 754.1 L719.4 751.7 L720.1 748.4 L720.8 745.3 L721.5 743.1 L722.2 740.7 L722.9 736.7 L723.6 734.8 L724.3 731.0 L725.0 728.5 L725.7 724.8 L726.4 720.7 L727.1 716.8 L727.8 712.7 L728.5 710.1 L729.2 705.6 L729.9 701.7 L730.6 699.6 L731.3 696.8 L732.0 693.0 L732.7 689.7 L733.4 687.0 L734.1 684.2 L734.8 682.1 L735.5 679.2 L736.2 677.0 L736.9 674.8 L737.6 673.1 L738.3 671.5 L739.0 669.1 L739.7 666.5 L740.4 664.5 L741.1 662.9 L741.8 660.9 L742.5 659.3 L743.2 657.3 L743.9 656.1 L744.6 655.8 L745.3 652.8 L746.0 652.3 L746.7 651.5 L747.4 651.2 L748.1 648.4 L748.8 647.9 L749.5 647.3 L750.2 647.1 L750.9 646.7 L751.6 647.6 L752.3 646.7 L753.0 646.3 L753.7 643.6 L754.4 643.5 L755.1 645.7 L755.8 646.5 L756.5 645.9 L757.2 646.8 L757.9 645.6 L758.6 647.4 L759.3 649.6 L760.0 649.9 L760.7 650.7 L761.4 651.9 L762.1 650.6 L762.8 651.3 L763.5 652.5 L764.2 654.9 L764.9 656.5 L765.6 658.3 L766.3 659.2 L767.0 660.4 L767.7 661.9 L768.4 662.8 L769.1 664.4 L769.8 665.1 L770.5 668.1 L771.2 668.8 L771.9 671.8 L772.6 673.2 L773.3 674.3 L774.0 675.8 L774.7 677.8 L775.4 680.4 L776.1 682.4 L776.8 683.2 L777.5 685.1 L778.2 687.9 L778.9 690.1 L779.6 691.8 L780.3 693.6 L781.0 696.4 L781.7 697.4 L782.4 699.9 L783.1 702.3 L783.8 705.2 L784.5 706.7 L785.2 709.1 L785.9 710.4 L786.6 712.0 L787.3 714.0 L788.0 717.3 L788.7 718.8 L789.4 720.1 L790.1 721.6 L790.8 724.4 L791.5 726.6 L792.2 728.0 L792.9 729.5 L793.6 732.0 L794.3 734.3 L795.0 734.9 L795.7 736.3 L796.4 738.7 L797.1 740.6 L797.8 742.7 L798.5 743.5 L799.2 746.1 L799.9 747.6 L800.6 748.5 L801.3 749.4 L802.0 752.2 L802.7 752.4 L803.4 754.8 L804.1 755.4 L804.8 756.6 L805.5 759.7 L806.2 760.9 L806.9 764.2 L807.6 777.2 L808.3 781.0 L809.0 782.4 L809.7 784.1 L810.4 785.9 L811.1 787.7 L811.8 787.6 L812.5 789.4 L813.2 790.4 L813.9 793.2 L814.6 793.0 L815.3 794.3 L816.0 795.7 L816.7 797.7 L817.4 800.0 L818.1 801.3 L818.8 802.3 L819.5 804.0 L820.2 805.1 L820.9 805.1 L821.6 805.9 L822.3 808.1 L823.0 808.7 L823.7 808.4 L824.4 810.5 L825.1 810.8 L825.8 811.5 L826.5 812.1 L827.2 812.4 L827.9 812.6 L828.6 813.4 L829.3 813.9 L830.0 815.3 L830.7 814.2 L831.4 816.0 L832.1 815.0 L832.8 815.6 L833.5 816.8 L834.2 816.9 L834.9 816.2 L835.6 815.4 L836.3 816.0 L837.0 815.4 L837.7 816.0 L838.4 814.3 L839.1 814.2 L839.8 814.7 L840.5 812.8 L841.2 812.9 L841.9 813.0 L842.6 812.2 L843.3 810.0 L844.0 809.1 L844.7 808.0 L845.4 808.4 L846.1 806.1 L846.8 805.6 L847.5 804.5 L848.2 801.9 L848.9 800.1 L849.6 799.5 L850.3 797.0 L851.0 794.4 L851.7 793.3 L852.4 790.5 L853.1 788.3 L853.8 785.6 L854.5 784.7 L855.2 787.1 L855.9 781.5 L856.6 783.3 L857.3 770.4 L858.0 771.1 L858.7 772.4 L859.4 776.5 L860.1 770.2 L860.8 767.6 L861.5 765.7 L862.2 764.3 L862.9 762.7 L863.6 761.7 L864.3 758.6 L865.0 757.8 L865.7 755.8 L866.4 754.1 L867.1 752.1 L867.8 750.0 L868.5 747.6 L869.2 745.7 L869.9 743.9 L870.6 742.7 L871.3 739.6 L872.0 737.9 L872.7 737.0 L873.4 734.3 L874.1 732.0 L874.8 730.1 L875.5 729.2 L876.2 726.9 L876.9 726.2 L877.6 724.2 L878.3 722.5 L879.0 719.4 L879.7 717.2 L880.4 715.4 L881.1 714.3 L881.8 712.9 L882.5 710.8 L883.2 708.7 L883.9 707.4 L884.6 706.2 L885.3 704.7 L886.0 703.3 L886.7 701.9 L887.4 700.0 L888.1 697.5 L888.8 698.1 L889.5 694.2 L890.2 694.0 L890.9 691.9 L891.6 692.4 L892.3 688.9 L893.0 688.2 L893.7 687.3 L894.4 686.0 L895.1 688.3 L895.8 686.0 L896.5 684.0 L897.2 683.5 L897.9 685.4 L898.6 682.6 L899.3 680.8 L900.0 682.7 L900.7 681.6 L901.4 682.6 L902.1 678.2 L902.8 679.4 L903.5 680.6 L904.2 680.5 L904.9 680.7 L905.6 676.9 L906.3 678.1 L907.0 677.7 L907.7 678.3 L908.4 682.0 L909.1 680.6 L909.8 682.5 L910.5 680.3 L911.2 682.9 L911.9 681.6 L912.6 681.5 L913.3 684.5 L914.0 686.1 L914.7 683.4 L915.4 686.6 L916.1 687.7 L916.8 686.9 L917.5 688.6 L918.2 688.6 L918.9 690.8 L919.6 692.1 L920.3 694.1 L921.0 695.6 L921.7 696.4 L922.4 697.6 L923.1 699.8 L923.8 702.0 L924.5 702.7 L925.2 704.6 L925.9 706.0 L926.6 708.9 L927.3 710.2 L928.0 711.3 L928.7 713.3 L929.4 715.9 L930.1 718.3 L930.8 720.6 L931.5 721.7 L932.2 724.0 L932.9 727.2 L933.6 729.0 L934.3 731.1 L935.0 733.6 L935.7 737.3 L936.4 738.7 L937.1 741.7 L937.8 743.8 L938.5 746.3 L939.2 749.5 L939.9 751.9 L940.6 752.8 L941.3 754.5 L942.0 757.3 L942.7 758.2 L943.4 759.7 L944.1 763.2 L944.8 764.1 L945.5 766.5 L946.2 767.4 L946.9 769.7 L947.6 770.4 L948.3 771.1 L949.0 772.2 L949.7 774.4 L950.4 775.9 L951.1 777.6 L951.8 777.2 L952.5 779.2 L953.2 779.7 L953.9 780.8 L954.6 780.9 L955.3 781.9 L956.0 783.0 L956.7 784.4 L957.4 781.6 L958.1 784.9 L958.8 787.6 L959.5 789.2 L960.2 784.3 L960.9 784.1 L961.6 790.1 L962.3 790.6 L963.0 787.4 L963.7 784.7 L964.4 791.1 L965.1 787.6 L965.8 791.0 L966.5 788.9 L967.2 789.8 L967.9 784.6 L968.6 788.0 L969.3 783.2 L970.0 783.5 L970.7 785.6 L971.4 784.6 L972.1 779.1 L972.8 778.4 L973.5 778.7 L974.2 778.6 L974.9 776.6 L975.6 773.8 L976.3 773.7 L977.0 776.1 L977.7 776.3 L978.4 769.3 L979.1 771.8 L979.8 771.8 L980.5 766.6 L981.2 769.8 L981.9 764.5 L982.6 765.8 L983.3 764.1 L984.0 763.2 L984.7 759.9 L985.4 759.2 L986.1 758.7 L986.8 756.4 L987.5 756.3 L988.2 753.7 L988.9 752.3 L989.6 748.6 L990.3 750.5 L991.0 748.4 L991.7 745.6 L992.4 747.2 L993.1 745.9 L993.8 742.6 L994.5 739.7 L995.2 739.9 L995.9 736.5 L996.6 735.2 L997.3 735.4 L998.0 732.1 L998.7 732.7 L999.4 731.8 L1000.1 727.9 L1000.8 730.0 L1001.5 725.6 L1002.2 728.1 L1002.9 727.2 L1003.6 724.5 L1004.3 720.7 L1005.0 722.1 L1005.7 720.3 L1006.4 722.5 L1007.1 716.9 L1007.8 720.0 L1008.5 719.8 L1009.2 717.4 L1009.9 716.9 L1010.6 712.5 L1011.3 716.0 L1012.0 712.4 L1012.7 714.1 L1013.4 713.0 L1014.1 707.9 L1014.8 710.6 L1015.5 710.6 L1016.2 704.9 L1016.9 705.7 L1017.6 707.1 L1018.3 701.0 L1019.0 699.8 L1019.7 691.0 L1020.4 691.6 L1021.1 689.9 L1021.8 690.1 L1022.5 690.3 L1023.2 688.5 L1023.9 688.1 L1024.6 687.9 L1025.3 687.0 L1026.0 686.0 L1026.7 685.7 L1027.4 685.0 L1028.1 685.9 L1028.8 684.9 L1029.5 684.9 L1030.2 683.2 L1030.9 684.0 L1031.6 682.6 L1032.3 683.1 L1033.0 683.2 L1033.7 682.5 L1034.4 683.2 L1035.1 682.5 L1035.8 682.4 L1036.5 682.8 L1037.2 681.3 L1037.9 682.9 L1038.6 682.3 L1039.3 682.1 L1040.0 683.1 L1040.7 682.5 L1041.4 684.2 L1042.1 683.9 L1042.8 683.9 L1043.5 685.0 L1044.2 684.8 L1044.9 684.9 L1045.6 686.6 L1046.3 686.2 L1047.0 688.5 L1047.7 688.5 L1048.4 690.4 L1049.1 692.3 L1049.8 692.7 L1050.5 694.1 L1051.2 694.6 L1051.9 695.3 L1052.6 696.8 L1053.3 698.4 L1054.0 700.9 L1054.7 702.2 L1055.4 704.1 L1056.1 706.7 L1056.8 707.2 L1057.5 709.2 L1058.2 711.9 L1058.9 712.9 L1059.6 715.1 L1060.3 718.1 L1061.0 720.2 L1061.7 723.3 L1062.4 725.9 L1063.1 730.2 L1063.8 732.8 L1064.5 730.6 L1065.2 737.8 L1065.9 738.1 L1066.6 735.9 L1067.3 747.3 L1068.0 743.3 L1068.7 744.9 L1069.4 746.6 L1070.1 749.4 L1070.8 751.6 L1071.5 753.3 L1072.2 754.4 L1072.9 756.1 L1073.6 757.5 L1074.3 760.5 L1075.0 762.2 L1075.7 763.7 L1076.4 766.1 L1077.1 767.6 L1077.8 770.4 L1078.5 771.9 L1079.2 772.9 L1079.9 775.9 L1080.6 776.2 L1081.3 778.9 L1082.0 780.6 L1082.7 782.0 L1083.4 783.5 L1084.1 786.5 L1084.8 786.8 L1085.5 789.5 L1086.2 791.8 L1086.9 792.0 L1087.6 793.8 L1088.3 796.1 L1089.0 797.5 L1089.7 799.3 L1090.4 801.1 L1091.1 801.5 L1091.8 803.1 L1092.5 804.5 L1093.2 805.4 L1093.9 808.3 L1094.6 809.5 L1095.3 810.8 L1096.0 810.8 L1096.7 813.6 L1097.4 814.7 L1098.1 815.4 L1098.8 817.1 L1099.5 817.7 L1100.2 818.5 L1100.9 819.5 L1101.6 820.8 L1102.3 820.4 L1103.0 822.5 L1103.7 825.0 L1104.4 825.5 L1105.1 826.7 L1105.8 826.7 L1106.5 825.5 L1107.2 827.2 L1107.9 827.2 L1108.6 828.8 L1109.3 828.0 L1110.0 826.7 L1110.7 828.1 L1111.4 828.8 L1112.1 825.2 L1112.8 827.3 L1113.5 823.3 L1114.2 823.7 L1114.9 822.7 L1115.6 823.9 L1116.3 823.6 L1117.0 821.2 L1117.7 819.1 L1118.4 818.7 L1119.1 816.3 L1119.8 814.8 L1120.5 814.6 L1121.2 812.5 L1121.9 810.9 L1122.6 808.9 L1123.3 807.5 L1124.0 804.4 L1124.7 802.7 L1125.4 800.1 L1126.1 798.0 L1126.8 794.9 L1127.5 793.1 L1128.2 790.4 L1128.9 787.4 L1129.6 784.8 L1130.3 783.0 L1131.0 779.5 L1131.7 778.4 L1132.4 774.5 L1133.1 771.7 L1133.8 769.2 L1134.5 768.0 L1135.2 764.2 L1135.9 760.9 L1136.6 757.8 L1137.3 754.8 L1138.0 752.9 L1138.7 749.8 L1139.4 746.9 L1140.1 743.9 L1140.8 739.9 L1141.5 738.0 L1142.2 735.0 L1142.9 732.8 L1143.6 729.8 L1144.3 726.7 L1145.0 721.6 L1145.7 719.3 L1146.4 715.1 L1147.1 711.2 L1147.8 706.0 L1148.5 702.6 L1149.2 699.1 L1149.9 695.8 L1150.6 694.5 L1151.3 691.7 L1152.0 688.6 L1152.7 686.3 L1153.4 683.3 L1154.1 680.2 L1154.8 677.5 L1155.5 675.1 L1156.2 674.1 L1156.9 670.9 L1157.6 668.9 L1158.3 667.0 L1159.0 664.3 L1159.7 662.9 L1160.4 661.2 L1161.1 660.4 L1161.8 658.3 L1162.5 656.6 L1163.2 656.3 L1163.9 653.9 L1164.6 653.7 L1165.3 651.8 L1166.0 649.0 L1166.7 649.2 L1167.4 648.6 L1168.1 649.0 L1168.8 647.1 L1169.5 647.6 L1170.2 646.5 L1170.9 644.9 L1171.6 646.3 L1172.3 643.8 L1173.0 645.8 L1173.7 644.1 L1174.4 643.7 L1175.1 644.9 L1175.8 647.1 L1176.5 648.4 L1177.2 646.0 L1177.9 648.1 L1178.6 648.7 L1179.3 650.3 L1180.0 649.3 L1180.7 651.0 L1181.4 651.7 L1182.1 654.2 L1182.8 654.1 L1183.5 656.6 L1184.2 656.7 L1184.9 657.9 L1185.6 660.1 L1186.3 661.0 L1187.0 661.7 L1187.7 664.2 L1188.4 664.7 L1189.1 667.6 L1189.8 669.1 L1190.5 671.1 L1191.2 672.6 L1191.9 673.9 L1192.6 675.8 L1193.3 677.6 L1194.0 680.3 L1194.7 680.7 L1195.4 684.1 L1196.1 684.5 L1196.8 686.8 L1197.5 688.9 L1198.2 692.1 L1198.9 693.5 L1199.6 695.4 L1200.3 698.3 L1201.0 699.2 L1201.7 701.7 L1202.4 703.9 L1203.1 706.3 L1203.8 708.3 L1204.5 710.1 L1205.2 711.6 L1205.9 713.6 L1206.6 715.3 L1207.3 718.5 L1208.0 720.2 L1208.7 722.3 L1209.4 723.2 L1210.1 725.6 L1210.8 728.1 L1211.5 729.6 L1212.2 730.6 L1212.9 733.0 L1213.6 735.5 L1214.3 736.2 L1215.0 737.9 L1215.7 739.9 L1216.4 742.3 L1217.1 744.2 L1217.8 744.5 L1218.5 746.1 L1219.2 747.7 L1219.9 749.2 L1220.6 751.0 L1221.3 751.8 L1222.0 753.5 L1222.7 754.9 L1223.4 757.9 L1224.1 759.0 L1224.8 760.0 L1225.5 763.6 L1226.2 770.0 L1226.9 781.0 L1227.6 783.4 L1228.3 784.4 L1229.0 785.6 L1229.7 786.4 L1230.4 787.3 L1231.1 789.4 L1231.8 789.8 L1232.5 791.4 L1233.2 793.1 L1233.9 793.8 L1234.6 795.9 L1235.3 798.0 L1236.0 799.2 L1236.7 800.2 L1237.4 801.8 L1238.1 802.7 L1238.8 803.3 L1239.5 805.3 L1240.2 806.0 L1240.9 807.5 L1241.6 808.8 L1242.3 808.8 L1243.0 810.0 L1243.7 811.2 L1244.4 811.4 L1245.1 811.8 L1245.8 813.2 L1246.5 814.0 L1247.2 814.2 L1247.9 814.4" stroke="#f4f02c" stroke-width="2.8" fill="none" stroke-linejoin="round"/>
<path d="M306.5 645.5 H1248.5 M306.5 828.3 H1248.5 M755.4 548 V903 M1109.5 548 V903" stroke="#f4f4d0" stroke-width="1.1" stroke-dasharray="3 3.1" fill="none"/>
<path d="M750.2 532.3 H760.6 V542.8 L755.4 548 L750.2 542.8 Z" fill="#000" stroke="#e8e8b0" stroke-width="1"/>
<text x="755.4" y="542.4" text-anchor="middle" fill="#f0f0d0" style="font-size:10.5px">1</text>
<path d="M1104.3 532.3 H1114.7 V542.8 L1109.5 548 L1104.3 542.8 Z" fill="#000" stroke="#e8e8b0" stroke-width="1"/>
<text x="1109.5" y="542.4" text-anchor="middle" fill="#f0f0d0" style="font-size:10.5px">2</text>
<g fill="#e4e45c" text-anchor="end"><text x="299.6" y="552.4">-14.60mV</text><text x="299.6" y="597.4">-14.70mV</text><text x="299.6" y="641.4">-14.80mV</text><text x="299.6" y="685.4">-14.90mV</text><text x="299.6" y="730.4">-15.00mV</text><text x="299.6" y="774.4">-15.10mV</text><text x="299.6" y="818.4">-15.20mV</text><text x="299.6" y="863.4">-15.30mV</text><text x="299.6" y="907.4">-15.40mV</text></g>
<g fill="#f4f4f4" text-anchor="middle"><text x="307.3" y="919.6">1.375ms</text><text x="412.3" y="919.6">1.400ms</text><text x="516.3" y="919.6">1.425ms</text><text x="621.3" y="919.6">1.450ms</text><text x="726.3" y="919.6">1.475ms</text><text x="830.3" y="919.6">1.500ms</text><text x="935.3" y="919.6">1.525ms</text><text x="1040.3" y="919.6">1.550ms</text><text x="1144.3" y="919.6">1.575ms</text><text x="1249.3" y="919.6">1.600ms</text></g>
<text x="186" y="559" fill="#3cc83c">A: a</text>
<circle cx="182.3" cy="570" r="2.2" fill="#f0f040"/><text x="186" y="574.6" fill="#e4e45c">B: nocht</text>
</svg></div>
<div style="left:176px;top:932px;width:1102px;height:17px;background:#f4f3ee"></div>
<div class="btn" style="left:176px;top:932px;width:16px;height:17px"><svg style="left:0;top:0" width="14" height="15" viewBox="0 0 14 15"><path d="M9 3.6 V11 L4.6 7.3 Z" fill="#000"/></svg></div>
<div class="btn" style="left:1261px;top:932px;width:17px;height:17px"><svg style="left:0;top:0" width="14" height="15" viewBox="0 0 14 15"><path d="M5.4 3.6 V11 L9.8 7.3 Z" fill="#000"/></svg></div>
<div class="btn" style="left:1245px;top:932px;width:16px;height:17px;box-shadow:none;border-color:#fff #aca899 #aca899 #fff"></div>
<div style="left:176px;top:949px;width:1102px;height:1px;background:#aca899"></div>
<svg style="left:176px;top:950px" width="1102" height="24" viewBox="176 950 1102 24">
<path d="M176 955.6 H332 M428.8 955.6 H1278" stroke="#000" stroke-width="1.3"/>
<path d="M184.2 955.6 L189.7 970.3 H246.6 L251.4 955.6 Z" fill="#fff" stroke="#000" stroke-width="1.1"/>
<path d="M251.4 955.6 L249 962.6 L252.4 970.3 H329.3 L333 958 L332 955.6 Z" fill="#fff" stroke="#000" stroke-width="1.1"/>
<path d="M331.9 955.6 L336.6 970.3 H423.8 L428.8 955.6" fill="#ece9d8" stroke="#000" stroke-width="1.1"/>
<g style="font-family:'Liberation Sans',sans-serif;font-size:11px;letter-spacing:-0.35px" fill="#000"><text x="189.8" y="966.6">AC Analysis</text><text x="254.4" y="966.6">Operating Point</text><text x="336.8" y="966.6" style="letter-spacing:-0.3px">Transient Analysis</text></g>
</svg>
<div style="left:0;top:977px;width:1280px;height:16px;border-top:1px solid #fff"></div>
<div style="left:1px;top:978px;width:49px;height:15px;border:1px solid;border-color:#c0bdaa #fbfaf4 #f2f0e4 #c0bdaa"></div>
<div style="left:52px;top:978px;width:1226px;height:15px;border:1px solid;border-color:#c0bdaa #fbfaf4 #f2f0e4 #c0bdaa"></div>
<div id="task" style="left:0;top:994px;width:1280px;height:30px;background:linear-gradient(#3168d5 0,#4993e6 3%,#2663e0 10%,#245cdb 40%,#2258d5 70%,#1f50c4 92%,#1941a5 100%)">
<div style="left:0;top:0;width:98px;height:30px;border-radius:0 12px 12px 0;background:linear-gradient(#3a8f3a 0,#5cb85c 8%,#3c9a3c 20%,#338f33 60%,#2a7e2a 90%,#256f25 100%);box-shadow:2px 0 3px rgba(0,0,40,.5)">
<svg style="left:11px;top:7px" width="20" height="18" viewBox="0 0 20 18"><path d="M1.5 3.5 Q5 1.5 8.5 3.5 L7.5 8.5 Q4 6.8 0.5 8.5 Z" fill="#e8562a"/><path d="M10 3.2 Q13.5 5 17.5 3 L16.5 8 Q12.5 10 9 8.2 Z" fill="#7cc242"/><path d="M0.2 10 Q3.8 8 7.2 10 L6.2 15 Q2.8 13.2 -0.8 15 Z" fill="#3a84e0"/><path d="M8.7 9.8 Q12.2 11.6 16.2 9.6 L15.2 14.6 Q11.2 16.6 7.7 14.8 Z" fill="#f8c820"/></svg>
<span style="left:36px;top:4px;color:#fff;font-size:18.5px;letter-spacing:0;font-weight:bold;font-style:italic;text-shadow:1px 1px 2px #1a4a1a;white-space:nowrap">Start</span></div>
<div style="left:109px;top:4px;width:159px;height:22px;border-radius:3px;background:linear-gradient(#1c4cb4,#2254c4 20%,#2358c8 80%,#1c4cb0);box-shadow:inset 1px 1px 2px #10308a">
<svg style="left:10px;top:4px" width="16" height="16" viewBox="0 0 16 16"><rect x="0.5" y="0.5" width="15" height="15" fill="#fff" stroke="#a02020"/><rect x="2" y="2" width="5" height="3" fill="#c02020"/><path d="M4 3 V13 M4 9 H9 M9 6 V12" stroke="#102080" stroke-width="1.4" fill="none"/><circle cx="11.5" cy="5" r="2.2" fill="#d03030"/><circle cx="11.5" cy="11.5" r="2.2" fill="#2040c0"/></svg>
<span style="left:29px;top:5px;color:#fff;font-size:11.5px;letter-spacing:-0.25px;white-space:nowrap">CircuitMaker</span></div>
<span style="left:1098px;top:8px;color:#fff;font-size:11.5px;letter-spacing:-0.2px">HU</span>
<div style="left:1133px;top:0;width:147px;height:30px;background:linear-gradient(#1290e8 0,#34b0f4 4%,#189ae8 12%,#1290e0 50%,#0f84d4 85%,#0c6cb8 100%);border-left:1px solid #0a3c90;box-shadow:inset 1px 0 1px #50c0f8">
<svg style="left:8px;top:5px" width="100" height="22" viewBox="0 0 100 22"><path d="M3 15 L13 5 L17 8 L8 17 Z" fill="#e8e8f0" stroke="#303040" stroke-width=".7"/><path d="M5 15 L13 7" stroke="#30b030" stroke-width="1.8"/><path d="M7 16 L15 8" stroke="#e8d020" stroke-width="1.6"/><path d="M9 17 L16.5 9.5" stroke="#d83030" stroke-width="1.6"/><path d="M13 5 L16 2.5 L18.5 5 L17 8 Z" fill="#2030b0"/><path d="M2 18.5 H14" stroke="#202020" stroke-width="1.6"/>
<path d="M22 4 Q28 1 34 4 V10 Q33 16 28 18.5 Q23 16 22 10 Z" fill="#d82020" stroke="#f0e8e8" stroke-width="1.2"/><path d="M25.6 7.6 L30.4 12.4 M30.4 7.6 L25.6 12.4" stroke="#fff" stroke-width="1.8"/>
<path d="M39.5 8 H43 L49 3 V18 L43 13 H39.5 Z" fill="#f08838" stroke="#502808" stroke-width=".9"/><path d="M51 4.5 Q55 10.5 51 16.5" stroke="#181818" stroke-width="1.5" fill="none"/>
<circle cx="63" cy="9" r="5.6" fill="#a8b0b8" stroke="#586068" stroke-width="1"/><circle cx="62" cy="8" r="2.4" fill="#f0f4f8"/><circle cx="64" cy="10" r="1.6" fill="#c86030"/><path d="M66.5 14 L71.5 17.5" stroke="#d0d8e0" stroke-width="2.6"/>
<ellipse cx="84" cy="10.5" rx="6" ry="8.4" fill="#1028c0"/><path d="M81 6.6 L87 13.4 L84 16.2 V4.8 L87 7.6 L81 14.4" stroke="#e02020" stroke-width="1.4" fill="none"/></svg>
<span style="left:105.5px;top:8px;color:#fff;font-size:11.5px;letter-spacing:0;white-space:nowrap">11:03</span></div>
</div>
</body></html>
